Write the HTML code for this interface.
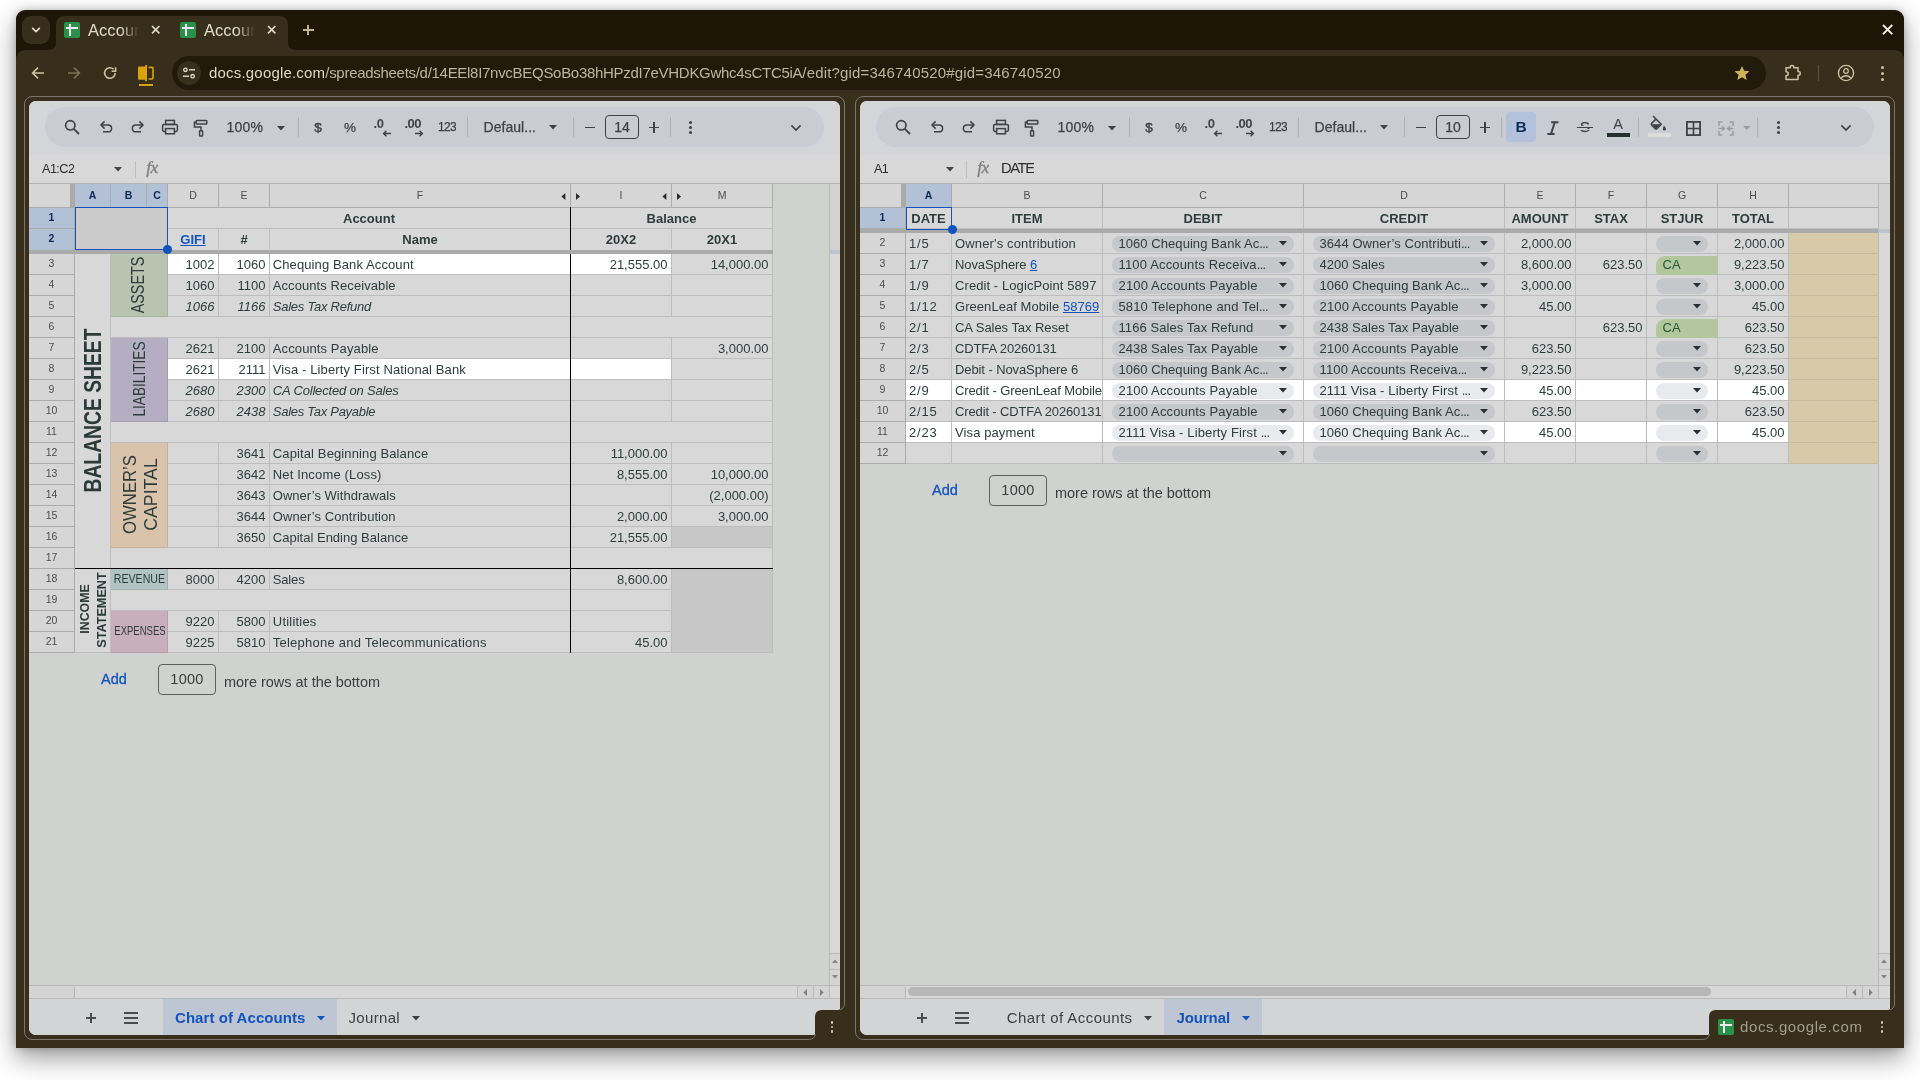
<!DOCTYPE html>
<html><head><meta charset="utf-8"><title>Sheets split view</title>
<style>
html,body{margin:0;padding:0;}
body{width:1920px;height:1080px;background:#fff;position:relative;overflow:hidden;font-family:"Liberation Sans",sans-serif;}
div{position:absolute;box-sizing:border-box;}
svg{position:absolute;overflow:visible;}
.t{white-space:nowrap;overflow:hidden;}
.v{white-space:nowrap;transform-origin:0 0;}
</style></head><body>
<div style="left:0;top:0;width:1920px;height:1080px;will-change:transform;">
<div style="left:16px;top:10px;width:1888px;height:1038px;background:#1e1607;border-radius:9px 9px 0 0;box-shadow:0 10px 26px rgba(0,0,0,.40),0 0 8px rgba(0,0,0,.22);"></div>
<div style="left:16px;top:50px;width:1888px;height:998px;background:#372f1b;border-radius:9px 9px 0 0;"></div>
<svg style="left:0;top:0" width="1920" height="100"><path d="M48 50 Q56 50 56 42 L56 25 Q56 16 65 16 L279 16 Q288 16 288 25 L288 42 Q288 50 296 50 Z" fill="#372f1b"/></svg>
<div style="left:22px;top:16px;width:28px;height:28px;background:#372f1b;border-radius:9px;"></div>
<svg style="left:30px;top:25px" width="12" height="10" viewBox="0 0 12 10"><path d="M2.2 2.8 L6 6.6 L9.8 2.8" fill="none" stroke="#e3ddcb" stroke-width="1.7"/></svg>
<div style="left:64px;top:22px;width:16px;height:16px;background:#2a9149;border-radius:2px;"></div>
<div style="left:69px;top:24px;width:2.4px;height:12px;background:#f1e6f1;"></div>
<div style="left:66px;top:27px;width:12px;height:2.2px;background:#f1e6f1;"></div>
<div style="left:180px;top:22px;width:16px;height:16px;background:#2a9149;border-radius:2px;"></div>
<div style="left:185px;top:24px;width:2.4px;height:12px;background:#f1e6f1;"></div>
<div style="left:182px;top:27px;width:12px;height:2.2px;background:#f1e6f1;"></div>
<div class="t" style="left:88px;top:18.7px;font-size:16.4px;line-height:22px;height:22px;color:#e3ddcb;letter-spacing:0.12px;width:52px;text-align:left;-webkit-mask-image:linear-gradient(90deg,#000 62%,transparent 98%);mask-image:linear-gradient(90deg,#000 62%,transparent 98%);">Account</div>
<div class="t" style="left:204px;top:18.7px;font-size:16.4px;line-height:22px;height:22px;color:#e3ddcb;letter-spacing:0.12px;width:52px;text-align:left;-webkit-mask-image:linear-gradient(90deg,#000 62%,transparent 98%);mask-image:linear-gradient(90deg,#000 62%,transparent 98%);">Account</div>
<svg style="left:151.3px;top:25.3px" width="9.4" height="9.4"><path d="M1 1 L8.4 8.4 M8.4 1 L1 8.4" stroke="#e3ddcb" stroke-width="1.6" fill="none"/></svg>
<svg style="left:267.3px;top:25.3px" width="9.4" height="9.4"><path d="M1 1 L8.4 8.4 M8.4 1 L1 8.4" stroke="#e3ddcb" stroke-width="1.6" fill="none"/></svg>
<div style="left:303px;top:29px;width:10.5px;height:2px;background:#bfb48f;"></div>
<div style="left:307.2px;top:24.8px;width:2px;height:10.5px;background:#bfb48f;"></div>
<svg style="left:1882.4px;top:24.4px" width="11.2" height="11.2"><path d="M1 1 L10.2 10.2 M10.2 1 L1 10.2" stroke="#f2efe6" stroke-width="1.9" fill="none"/></svg>
<svg style="left:31px;top:66px" width="14" height="14" viewBox="0 0 14 14"><path d="M13 7 H2.2 M7 1.6 L1.6 7 L7 12.4" fill="none" stroke="#cdc3a2" stroke-width="1.6"/></svg>
<svg style="left:67px;top:66px" width="14" height="14" viewBox="0 0 14 14"><path d="M1 7 H11.8 M7 1.6 L12.4 7 L7 12.4" fill="none" stroke="#7d735a" stroke-width="1.6"/></svg>
<svg style="left:102px;top:65px" width="16" height="16" viewBox="0 0 16 16"><path d="M13.2 8 A5.3 5.3 0 1 1 11.6 4.2" fill="none" stroke="#cdc3a2" stroke-width="1.6"/><path d="M13.6 2.2 V6.2 H9.6" fill="none" stroke="#cdc3a2" stroke-width="1.6"/></svg>
<svg style="left:137px;top:64px" width="18" height="24" viewBox="0 0 18 24"><path d="M2.2 2.6 H8.2 V1 H10 V17.2 H8.2 V15.8 H2.2 Q1 15.8 1 14.6 V3.8 Q1 2.6 2.2 2.6 Z" fill="#d9a30c"/><path d="M11.6 3.4 H14.8 Q16 3.4 16 4.6 V13.8 Q16 15 14.8 15 H11.6" fill="none" stroke="#d9a30c" stroke-width="1.6"/><rect x="2" y="20" width="14" height="2" fill="#d9a30c"/></svg>
<div style="left:172px;top:56px;width:1594px;height:34px;background:#221a0a;border-radius:17px;"></div>
<div style="left:177px;top:61px;width:24px;height:24px;background:#372f1b;border-radius:12px;"></div>
<svg style="left:181px;top:65px" width="16" height="16" viewBox="0 0 16 16"><circle cx="4.4" cy="4.8" r="1.7" fill="none" stroke="#e3ddcb" stroke-width="1.3"/><path d="M8 4.8 H14" stroke="#e3ddcb" stroke-width="1.4"/><circle cx="11.6" cy="11.2" r="1.7" fill="none" stroke="#e3ddcb" stroke-width="1.3"/><path d="M2 11.2 H8" stroke="#e3ddcb" stroke-width="1.4"/></svg>
<div class="t" style="left:209px;top:62px;font-size:15px;line-height:22px;height:22px;color:#bcb5a1;"><span style="color:#dfd9c6;letter-spacing:0.192px">docs.google.com</span><span style="letter-spacing:-0.29px">/spreadsheets/d/14EEl8I7nvcBEQSoBo38hHPzdI7eVHDKGwhc4sCTC5iA</span><span style="letter-spacing:0.176px">/edit?gid=346740520#gid=346740520</span></div>
<svg style="left:1733px;top:64px" width="18" height="18" viewBox="0 0 24 24"><path d="M12 2.5 L14.9 9 L22 9.7 L16.6 14.4 L18.2 21.4 L12 17.7 L5.8 21.4 L7.4 14.4 L2 9.7 L9.1 9 Z" fill="#cdb45a"/></svg>
<svg style="left:1783px;top:63px" width="19" height="19" viewBox="0 0 19 19"><path d="M3 4.8 H7.2 Q7 2.4 9 2.4 Q11 2.4 10.8 4.8 H15 V8.6 Q17.2 8.4 17.2 10.4 Q17.2 12.4 15 12.2 V16.6 H3 V12.8 Q5.2 12.8 5.2 10.8 Q5.2 8.8 3 8.8 Z" fill="none" stroke="#cdc3a2" stroke-width="1.5" stroke-linejoin="round"/></svg>
<div style="left:1818px;top:65px;width:1.2px;height:16px;background:#5a5038;"></div>
<svg style="left:1837px;top:64px" width="18" height="18" viewBox="0 0 18 18"><circle cx="9" cy="9" r="7.6" fill="none" stroke="#cdc3a2" stroke-width="1.4"/><circle cx="9" cy="7" r="2.3" fill="none" stroke="#cdc3a2" stroke-width="1.3"/><path d="M4 14 Q9 9.6 14 14" fill="none" stroke="#cdc3a2" stroke-width="1.3"/></svg>
<div style="left:1880.5px;top:66.1px;width:3px;height:3px;background:#cdc3a2;border-radius:2px;"></div>
<div style="left:1880.5px;top:72.1px;width:3px;height:3px;background:#cdc3a2;border-radius:2px;"></div>
<div style="left:1880.5px;top:78.1px;width:3px;height:3px;background:#cdc3a2;border-radius:2px;"></div>
<div style="left:24px;top:96px;width:821px;height:944px;border:1px solid #7c766a;border-radius:8px;"></div>
<div style="left:855px;top:96px;width:1040px;height:944px;border:1px solid #7c766a;border-radius:8px;"></div>
<div style="left:29px;top:101px;width:811px;height:934px;background:#d0d2cf;border-radius:7px;overflow:hidden;">
<div style="left:0px;top:-1px;width:811px;height:55px;background:#d4d5d8;"></div>
<div style="left:16px;top:6px;width:779px;height:40px;background:#c9cdd3;border-radius:20px;"></div>
<svg style="left:34px;top:17px" width="18" height="18"><circle cx="7.3" cy="7.3" r="4.7" fill="none" stroke="#3f4245" stroke-width="1.7"/><path d="M10.8 10.8 L16 16" stroke="#3f4245" stroke-width="1.9"/></svg>
<svg style="left:70px;top:18px" width="15" height="16"><path d="M2.2 6 H9 Q12.6 6 12.6 9.4 Q12.6 12.8 9 12.8 H4" fill="none" stroke="#3f4245" stroke-width="1.5"/><path d="M5.6 2.4 L2 6 L5.6 9.6" fill="none" stroke="#3f4245" stroke-width="1.5"/></svg>
<svg style="left:101px;top:18px" width="15" height="16"><path d="M12.8 6 H6 Q2.4 6 2.4 9.4 Q2.4 12.8 6 12.8 H11" fill="none" stroke="#3f4245" stroke-width="1.5"/><path d="M9.4 2.4 L13 6 L9.4 9.6" fill="none" stroke="#3f4245" stroke-width="1.5"/></svg>
<svg style="left:132px;top:18px" width="18" height="17"><rect x="4.6" y="1.4" width="8.8" height="4" fill="none" stroke="#3f4245" stroke-width="1.5"/><rect x="1.6" y="5.4" width="14.8" height="7" rx="1.4" fill="none" stroke="#3f4245" stroke-width="1.5"/><rect x="4.6" y="9.6" width="8.8" height="5.2" fill="#c9cdd3" stroke="#3f4245" stroke-width="1.5"/></svg>
<svg style="left:164px;top:18px" width="16" height="19"><rect x="3.2" y="1.4" width="10.6" height="3.6" rx="0.8" fill="none" stroke="#3f4245" stroke-width="1.5"/><path d="M3.2 3.2 H1.4 V8 H8 V11.6" fill="none" stroke="#3f4245" stroke-width="1.5"/><rect x="6.6" y="11.8" width="3" height="5.2" rx="0.6" fill="none" stroke="#3f4245" stroke-width="1.4"/></svg>
<div class="t" style="left:197.5px;top:17px;font-size:14px;line-height:19px;height:19px;color:#3f4245;letter-spacing:0.176px;-webkit-text-stroke:0.25px #3f4245;">100%</div>
<svg style="left:247.5px;top:24.95px" width="8" height="4.5"><path d="M0 0 H8 L4.0 4.5 Z" fill="#3f4245"/></svg>
<div style="left:269px;top:16px;width:1px;height:20px;background:#b0b3b7;"></div>
<div class="t" style="left:282px;top:17px;font-size:13.5px;line-height:19px;height:19px;color:#3f4245;width:14px;text-align:center;-webkit-text-stroke:0.45px #3f4245;">$</div>
<div class="t" style="left:313px;top:17px;font-size:13.5px;line-height:19px;height:19px;color:#3f4245;width:16px;text-align:center;-webkit-text-stroke:0.25px #3f4245;">%</div>
<div class="t" style="left:344.5px;top:13.5px;font-size:13px;line-height:18px;height:18px;color:#3f4245;font-weight:700;letter-spacing:-0.3px;">.0</div>
<svg style="left:353px;top:29px" width="10" height="7"><path d="M9 3.5 H2 M4.4 0.8 L1.6 3.5 L4.4 6.2" fill="none" stroke="#3f4245" stroke-width="1.4"/></svg>
<div class="t" style="left:375.5px;top:13.5px;font-size:13px;line-height:18px;height:18px;color:#3f4245;font-weight:700;letter-spacing:-0.5px;">.00</div>
<svg style="left:384.5px;top:29px" width="10" height="7"><path d="M1 3.5 H8 M5.6 0.8 L8.4 3.5 L5.6 6.2" fill="none" stroke="#3f4245" stroke-width="1.4"/></svg>
<div class="t" style="left:409px;top:18px;font-size:12px;line-height:17px;height:17px;color:#3f4245;letter-spacing:-0.672px;-webkit-text-stroke:0.25px #3f4245;">123</div>
<div style="left:438px;top:16px;width:1px;height:20px;background:#b0b3b7;"></div>
<div class="t" style="left:454.5px;top:16.5px;font-size:14px;line-height:19px;height:19px;color:#3f4245;letter-spacing:0.042px;-webkit-text-stroke:0.25px #3f4245;">Defaul...</div>
<svg style="left:520.0px;top:24.35px" width="8" height="4.5"><path d="M0 0 H8 L4.0 4.5 Z" fill="#3f4245"/></svg>
<div style="left:544px;top:16px;width:1px;height:20px;background:#b0b3b7;"></div>
<div style="left:556px;top:25.6px;width:10px;height:1.8px;background:#3f4245;"></div>
<div style="left:576px;top:14px;width:34px;height:24px;border:1px solid #3f4245;border-radius:4px;"></div>
<div class="t" style="left:576px;top:17px;font-size:14px;line-height:19px;height:19px;color:#3f4245;width:34px;text-align:center;-webkit-text-stroke:0.25px #3f4245;">14</div>
<div style="left:619.8px;top:25.6px;width:10.6px;height:1.8px;background:#3f4245;"></div>
<div style="left:624.2px;top:21.2px;width:1.8px;height:10.6px;background:#3f4245;"></div>
<div style="left:641px;top:16px;width:1px;height:20px;background:#b0b3b7;"></div>
<div style="left:660.3px;top:20.1px;width:3.0px;height:3.0px;background:#3f4245;border-radius:1.5px;"></div>
<div style="left:660.3px;top:25.1px;width:3.0px;height:3.0px;background:#3f4245;border-radius:1.5px;"></div>
<div style="left:660.3px;top:30.1px;width:3.0px;height:3.0px;background:#3f4245;border-radius:1.5px;"></div>
<svg style="left:761px;top:23px" width="12" height="8"><path d="M1.4 1.4 L6 6 L10.6 1.4" fill="none" stroke="#3f4245" stroke-width="1.6"/></svg>
<div style="left:0px;top:54px;width:811px;height:29px;background:#d8d8d8;border-bottom:1px solid #b4b4b4;"></div>
<div class="t" style="left:13px;top:58.6px;font-size:12.6px;line-height:18px;height:18px;color:#2a2c2e;letter-spacing:-0.52px;">A1:C2</div>
<svg style="left:85.0px;top:65.75px" width="8" height="4.5"><path d="M0 0 H8 L4.0 4.5 Z" fill="#444"/></svg>
<div style="left:106px;top:60px;width:1px;height:17px;background:#bdbdbd;"></div>
<div class="t" style="left:117.2px;top:55.3px;font-size:17.5px;line-height:22px;height:22px;color:#808080;font-style:italic;font-family:'Liberation Serif',serif;letter-spacing:-0.6px;-webkit-text-stroke:0.35px #808080;">fx</div>
<div style="left:0px;top:83px;width:744px;height:469px;background:#d8d8d8;"></div>
<div style="left:0px;top:83px;width:744px;height:24px;background:#d6d6d6;"></div>
<div style="left:0px;top:83px;width:46px;height:469px;background:#d6d6d6;"></div>
<div style="left:46px;top:83px;width:93px;height:23px;background:#b3c1d7;"></div>
<div style="left:0px;top:107px;width:45px;height:42px;background:#b3c1d7;"></div>
<div style="left:139px;top:153px;width:503px;height:20px;background:#fff;"></div>
<div style="left:139px;top:258px;width:503px;height:20px;background:#fff;"></div>
<div style="left:643px;top:426px;width:100px;height:20px;background:#c7c7c7;"></div>
<div style="left:643px;top:468px;width:100px;height:83px;background:#c7c7c7;"></div>
<div style="left:46px;top:107px;width:92px;height:41px;background:#cbcbcb;"></div>
<div style="left:0px;top:106px;width:744px;height:1px;background:#ababab;"></div>
<div style="left:41px;top:83px;width:1px;height:23px;background:#ababab;"></div>
<div style="left:81px;top:83px;width:1px;height:23px;background:#ababab;"></div>
<div style="left:117px;top:83px;width:1px;height:23px;background:#ababab;"></div>
<div style="left:138px;top:83px;width:1px;height:23px;background:#ababab;"></div>
<div style="left:189px;top:83px;width:1px;height:23px;background:#ababab;"></div>
<div style="left:240px;top:83px;width:1px;height:23px;background:#ababab;"></div>
<div style="left:541px;top:83px;width:1px;height:23px;background:#ababab;"></div>
<div style="left:642px;top:83px;width:1px;height:23px;background:#ababab;"></div>
<div style="left:743px;top:83px;width:1px;height:23px;background:#ababab;"></div>
<div style="left:0px;top:127px;width:46px;height:1px;background:#ababab;"></div>
<div style="left:0px;top:173px;width:46px;height:1px;background:#ababab;"></div>
<div style="left:0px;top:194px;width:46px;height:1px;background:#ababab;"></div>
<div style="left:0px;top:215px;width:46px;height:1px;background:#ababab;"></div>
<div style="left:0px;top:236px;width:46px;height:1px;background:#ababab;"></div>
<div style="left:0px;top:257px;width:46px;height:1px;background:#ababab;"></div>
<div style="left:0px;top:278px;width:46px;height:1px;background:#ababab;"></div>
<div style="left:0px;top:299px;width:46px;height:1px;background:#ababab;"></div>
<div style="left:0px;top:320px;width:46px;height:1px;background:#ababab;"></div>
<div style="left:0px;top:341px;width:46px;height:1px;background:#ababab;"></div>
<div style="left:0px;top:362px;width:46px;height:1px;background:#ababab;"></div>
<div style="left:0px;top:383px;width:46px;height:1px;background:#ababab;"></div>
<div style="left:0px;top:404px;width:46px;height:1px;background:#ababab;"></div>
<div style="left:0px;top:425px;width:46px;height:1px;background:#ababab;"></div>
<div style="left:0px;top:446px;width:46px;height:1px;background:#ababab;"></div>
<div style="left:0px;top:467px;width:46px;height:1px;background:#ababab;"></div>
<div style="left:0px;top:488px;width:46px;height:1px;background:#ababab;"></div>
<div style="left:0px;top:509px;width:46px;height:1px;background:#ababab;"></div>
<div style="left:0px;top:530px;width:46px;height:1px;background:#ababab;"></div>
<div style="left:0px;top:551px;width:46px;height:1px;background:#ababab;"></div>
<div style="left:45px;top:107px;width:1px;height:445px;background:#ababab;"></div>
<div style="left:139px;top:127px;width:605px;height:1px;background:#bdbdbd;"></div>
<div style="left:139px;top:173px;width:503px;height:1px;background:#bdbdbd;"></div>
<div style="left:642px;top:173px;width:102px;height:1px;background:#bdbdbd;"></div>
<div style="left:139px;top:194px;width:503px;height:1px;background:#bdbdbd;"></div>
<div style="left:642px;top:194px;width:102px;height:1px;background:#bdbdbd;"></div>
<div style="left:82px;top:215px;width:57px;height:1px;background:#bdbdbd;"></div>
<div style="left:139px;top:215px;width:503px;height:1px;background:#bdbdbd;"></div>
<div style="left:642px;top:215px;width:102px;height:1px;background:#bdbdbd;"></div>
<div style="left:82px;top:236px;width:57px;height:1px;background:#bdbdbd;"></div>
<div style="left:139px;top:236px;width:503px;height:1px;background:#bdbdbd;"></div>
<div style="left:642px;top:236px;width:102px;height:1px;background:#bdbdbd;"></div>
<div style="left:139px;top:257px;width:503px;height:1px;background:#bdbdbd;"></div>
<div style="left:642px;top:257px;width:102px;height:1px;background:#bdbdbd;"></div>
<div style="left:139px;top:278px;width:503px;height:1px;background:#bdbdbd;"></div>
<div style="left:642px;top:278px;width:102px;height:1px;background:#bdbdbd;"></div>
<div style="left:139px;top:299px;width:503px;height:1px;background:#bdbdbd;"></div>
<div style="left:642px;top:299px;width:102px;height:1px;background:#bdbdbd;"></div>
<div style="left:82px;top:320px;width:57px;height:1px;background:#bdbdbd;"></div>
<div style="left:139px;top:320px;width:503px;height:1px;background:#bdbdbd;"></div>
<div style="left:642px;top:320px;width:102px;height:1px;background:#bdbdbd;"></div>
<div style="left:82px;top:341px;width:57px;height:1px;background:#bdbdbd;"></div>
<div style="left:139px;top:341px;width:503px;height:1px;background:#bdbdbd;"></div>
<div style="left:642px;top:341px;width:102px;height:1px;background:#bdbdbd;"></div>
<div style="left:139px;top:362px;width:503px;height:1px;background:#bdbdbd;"></div>
<div style="left:642px;top:362px;width:102px;height:1px;background:#bdbdbd;"></div>
<div style="left:139px;top:383px;width:503px;height:1px;background:#bdbdbd;"></div>
<div style="left:642px;top:383px;width:102px;height:1px;background:#bdbdbd;"></div>
<div style="left:139px;top:404px;width:503px;height:1px;background:#bdbdbd;"></div>
<div style="left:642px;top:404px;width:102px;height:1px;background:#bdbdbd;"></div>
<div style="left:139px;top:425px;width:503px;height:1px;background:#bdbdbd;"></div>
<div style="left:642px;top:425px;width:102px;height:1px;background:#bdbdbd;"></div>
<div style="left:82px;top:446px;width:57px;height:1px;background:#bdbdbd;"></div>
<div style="left:139px;top:446px;width:503px;height:1px;background:#bdbdbd;"></div>
<div style="left:642px;top:446px;width:102px;height:1px;background:#bdbdbd;"></div>
<div style="left:46px;top:467px;width:36px;height:1px;background:#bdbdbd;"></div>
<div style="left:82px;top:467px;width:57px;height:1px;background:#bdbdbd;"></div>
<div style="left:139px;top:467px;width:503px;height:1px;background:#bdbdbd;"></div>
<div style="left:642px;top:467px;width:102px;height:1px;background:#bdbdbd;"></div>
<div style="left:82px;top:488px;width:57px;height:1px;background:#bdbdbd;"></div>
<div style="left:139px;top:488px;width:503px;height:1px;background:#bdbdbd;"></div>
<div style="left:82px;top:509px;width:57px;height:1px;background:#bdbdbd;"></div>
<div style="left:139px;top:509px;width:503px;height:1px;background:#bdbdbd;"></div>
<div style="left:139px;top:530px;width:503px;height:1px;background:#bdbdbd;"></div>
<div style="left:46px;top:551px;width:36px;height:1px;background:#bdbdbd;"></div>
<div style="left:82px;top:551px;width:57px;height:1px;background:#bdbdbd;"></div>
<div style="left:139px;top:551px;width:503px;height:1px;background:#bdbdbd;"></div>
<div style="left:642px;top:551px;width:102px;height:1px;background:#bdbdbd;"></div>
<div style="left:46px;top:551px;width:698px;height:1px;background:#bdbdbd;"></div>
<div style="left:81px;top:153px;width:1px;height:399px;background:#bdbdbd;"></div>
<div style="left:138px;top:153px;width:1px;height:62px;background:#bdbdbd;"></div>
<div style="left:138px;top:237px;width:1px;height:83px;background:#bdbdbd;"></div>
<div style="left:138px;top:342px;width:1px;height:104px;background:#bdbdbd;"></div>
<div style="left:138px;top:468px;width:1px;height:20px;background:#bdbdbd;"></div>
<div style="left:138px;top:510px;width:1px;height:41px;background:#bdbdbd;"></div>
<div style="left:189px;top:128px;width:1px;height:20px;background:#bdbdbd;"></div>
<div style="left:240px;top:128px;width:1px;height:20px;background:#bdbdbd;"></div>
<div style="left:189px;top:153px;width:1px;height:62px;background:#bdbdbd;"></div>
<div style="left:240px;top:153px;width:1px;height:62px;background:#bdbdbd;"></div>
<div style="left:189px;top:237px;width:1px;height:83px;background:#bdbdbd;"></div>
<div style="left:240px;top:237px;width:1px;height:83px;background:#bdbdbd;"></div>
<div style="left:189px;top:342px;width:1px;height:104px;background:#bdbdbd;"></div>
<div style="left:240px;top:342px;width:1px;height:104px;background:#bdbdbd;"></div>
<div style="left:189px;top:468px;width:1px;height:20px;background:#bdbdbd;"></div>
<div style="left:240px;top:468px;width:1px;height:20px;background:#bdbdbd;"></div>
<div style="left:189px;top:510px;width:1px;height:41px;background:#bdbdbd;"></div>
<div style="left:240px;top:510px;width:1px;height:41px;background:#bdbdbd;"></div>
<div style="left:138px;top:128px;width:1px;height:20px;background:#bdbdbd;"></div>
<div style="left:642px;top:128px;width:1px;height:20px;background:#bdbdbd;"></div>
<div style="left:642px;top:153px;width:1px;height:62px;background:#bdbdbd;"></div>
<div style="left:642px;top:237px;width:1px;height:83px;background:#bdbdbd;"></div>
<div style="left:642px;top:342px;width:1px;height:104px;background:#bdbdbd;"></div>
<div style="left:642px;top:468px;width:1px;height:83px;background:#bdbdbd;"></div>
<div style="left:743px;top:107px;width:1px;height:445px;background:#bdbdbd;"></div>
<div style="left:82px;top:153px;width:57px;height:63px;background:#b8c4b0;box-shadow:inset -1px -1px 0 rgba(0,0,0,.09);"></div>
<div style="left:82px;top:237px;width:57px;height:84px;background:#b3aec2;box-shadow:inset -1px -1px 0 rgba(0,0,0,.09);"></div>
<div style="left:82px;top:342px;width:57px;height:105px;background:#d9c3ab;box-shadow:inset -1px -1px 0 rgba(0,0,0,.09);"></div>
<div style="left:82px;top:468px;width:57px;height:21px;background:#b1c3c2;box-shadow:inset -1px -1px 0 rgba(0,0,0,.09);"></div>
<div style="left:82px;top:510px;width:57px;height:42px;background:#c8afbb;box-shadow:inset -1px -1px 0 rgba(0,0,0,.09);"></div>
<div style="left:541px;top:106px;width:1.2px;height:446px;background:#000;"></div>
<div style="left:46px;top:466.8px;width:698px;height:1.2px;background:#000;"></div>
<div style="left:0px;top:149px;width:744px;height:4px;background:#aaaaaa;"></div>
<div style="left:41px;top:83px;width:5px;height:23px;background:#aaaaaa;"></div>
<div class="t" style="left:43.5px;top:85.1px;font-size:10.5px;line-height:18px;height:18px;color:#0d2a57;font-weight:700;width:40px;text-align:center;">A</div>
<div class="t" style="left:79.5px;top:85.1px;font-size:10.5px;line-height:18px;height:18px;color:#0d2a57;font-weight:700;width:40px;text-align:center;">B</div>
<div class="t" style="left:108px;top:85.1px;font-size:10.5px;line-height:18px;height:18px;color:#0d2a57;font-weight:700;width:40px;text-align:center;">C</div>
<div class="t" style="left:144px;top:85.1px;font-size:10.5px;line-height:18px;height:18px;color:#4a4d50;width:40px;text-align:center;">D</div>
<div class="t" style="left:195px;top:85.1px;font-size:10.5px;line-height:18px;height:18px;color:#4a4d50;width:40px;text-align:center;">E</div>
<div class="t" style="left:371px;top:85.1px;font-size:10.5px;line-height:18px;height:18px;color:#4a4d50;width:40px;text-align:center;">F</div>
<div class="t" style="left:572px;top:85.1px;font-size:10.5px;line-height:18px;height:18px;color:#4a4d50;width:40px;text-align:center;">I</div>
<div class="t" style="left:673px;top:85.1px;font-size:10.5px;line-height:18px;height:18px;color:#4a4d50;width:40px;text-align:center;">M</div>
<svg style="left:532.1px;top:91.8px" width="4.4" height="7"><path d="M4.4 0 L0.4 3.5 L4.4 7 Z" fill="#2d2d2d"/></svg>
<svg style="left:546.6px;top:91.8px" width="4.4" height="7"><path d="M0 0 L4 3.5 L0 7 Z" fill="#2d2d2d"/></svg>
<svg style="left:633.1px;top:91.8px" width="4.4" height="7"><path d="M4.4 0 L0.4 3.5 L4.4 7 Z" fill="#2d2d2d"/></svg>
<svg style="left:647.6px;top:91.8px" width="4.4" height="7"><path d="M0 0 L4 3.5 L0 7 Z" fill="#2d2d2d"/></svg>
<div class="t" style="left:0px;top:107.1px;font-size:10.5px;line-height:18px;height:18px;color:#0d2a57;font-weight:700;width:45px;text-align:center;">1</div>
<div class="t" style="left:0px;top:128.1px;font-size:10.5px;line-height:18px;height:18px;color:#0d2a57;font-weight:700;width:45px;text-align:center;">2</div>
<div class="t" style="left:0px;top:153.1px;font-size:10.5px;line-height:18px;height:18px;color:#4a4d50;width:45px;text-align:center;">3</div>
<div class="t" style="left:0px;top:174.1px;font-size:10.5px;line-height:18px;height:18px;color:#4a4d50;width:45px;text-align:center;">4</div>
<div class="t" style="left:0px;top:195.1px;font-size:10.5px;line-height:18px;height:18px;color:#4a4d50;width:45px;text-align:center;">5</div>
<div class="t" style="left:0px;top:216.1px;font-size:10.5px;line-height:18px;height:18px;color:#4a4d50;width:45px;text-align:center;">6</div>
<div class="t" style="left:0px;top:237.1px;font-size:10.5px;line-height:18px;height:18px;color:#4a4d50;width:45px;text-align:center;">7</div>
<div class="t" style="left:0px;top:258.1px;font-size:10.5px;line-height:18px;height:18px;color:#4a4d50;width:45px;text-align:center;">8</div>
<div class="t" style="left:0px;top:279.1px;font-size:10.5px;line-height:18px;height:18px;color:#4a4d50;width:45px;text-align:center;">9</div>
<div class="t" style="left:0px;top:300.1px;font-size:10.5px;line-height:18px;height:18px;color:#4a4d50;width:45px;text-align:center;">10</div>
<div class="t" style="left:0px;top:321.1px;font-size:10.5px;line-height:18px;height:18px;color:#4a4d50;width:45px;text-align:center;">11</div>
<div class="t" style="left:0px;top:342.1px;font-size:10.5px;line-height:18px;height:18px;color:#4a4d50;width:45px;text-align:center;">12</div>
<div class="t" style="left:0px;top:363.1px;font-size:10.5px;line-height:18px;height:18px;color:#4a4d50;width:45px;text-align:center;">13</div>
<div class="t" style="left:0px;top:384.1px;font-size:10.5px;line-height:18px;height:18px;color:#4a4d50;width:45px;text-align:center;">14</div>
<div class="t" style="left:0px;top:405.1px;font-size:10.5px;line-height:18px;height:18px;color:#4a4d50;width:45px;text-align:center;">15</div>
<div class="t" style="left:0px;top:426.1px;font-size:10.5px;line-height:18px;height:18px;color:#4a4d50;width:45px;text-align:center;">16</div>
<div class="t" style="left:0px;top:447.1px;font-size:10.5px;line-height:18px;height:18px;color:#4a4d50;width:45px;text-align:center;">17</div>
<div class="t" style="left:0px;top:468.1px;font-size:10.5px;line-height:18px;height:18px;color:#4a4d50;width:45px;text-align:center;">18</div>
<div class="t" style="left:0px;top:489.1px;font-size:10.5px;line-height:18px;height:18px;color:#4a4d50;width:45px;text-align:center;">19</div>
<div class="t" style="left:0px;top:510.1px;font-size:10.5px;line-height:18px;height:18px;color:#4a4d50;width:45px;text-align:center;">20</div>
<div class="t" style="left:0px;top:531.1px;font-size:10.5px;line-height:18px;height:18px;color:#4a4d50;width:45px;text-align:center;">21</div>
<div class="t" style="left:143px;top:107px;font-size:13px;line-height:21px;height:21px;color:#2e3d3b;font-weight:700;width:394px;text-align:center;">Account</div>
<div class="t" style="left:546px;top:107px;font-size:13px;line-height:21px;height:21px;color:#2e3d3b;font-weight:700;width:193px;text-align:center;">Balance</div>
<div class="t" style="left:143px;top:128px;font-size:13px;line-height:21px;height:21px;color:#1253bd;font-weight:700;width:42px;text-align:center;text-decoration:underline;">GIFI</div>
<div class="t" style="left:194px;top:128px;font-size:13px;line-height:21px;height:21px;color:#2e3d3b;font-weight:700;width:42px;text-align:center;">#</div>
<div class="t" style="left:245px;top:128px;font-size:13px;line-height:21px;height:21px;color:#2e3d3b;font-weight:700;width:292px;text-align:center;">Name</div>
<div class="t" style="left:546px;top:128px;font-size:13px;line-height:21px;height:21px;color:#2e3d3b;font-weight:700;width:92px;text-align:center;">20X2</div>
<div class="t" style="left:647px;top:128px;font-size:13px;line-height:21px;height:21px;color:#2e3d3b;font-weight:700;width:92px;text-align:center;">20X1</div>
<div class="t" style="left:142.5px;top:153px;font-size:13px;line-height:21px;height:21px;color:#2e3d3b;width:43.0px;text-align:right;">1002</div>
<div class="t" style="left:193.5px;top:153px;font-size:13px;line-height:21px;height:21px;color:#2e3d3b;width:43.0px;text-align:right;">1060</div>
<div class="t" style="left:243.8px;top:153px;font-size:13px;line-height:21px;height:21px;color:#2e3d3b;letter-spacing:0.104px;width:294.4px;text-align:left;">Chequing Bank Account</div>
<div class="t" style="left:545.5px;top:153px;font-size:13px;line-height:21px;height:21px;color:#2e3d3b;width:93.0px;text-align:right;">21,555.00</div>
<div class="t" style="left:646.5px;top:153px;font-size:13px;line-height:21px;height:21px;color:#2e3d3b;width:93.0px;text-align:right;">14,000.00</div>
<div class="t" style="left:142.5px;top:174px;font-size:13px;line-height:21px;height:21px;color:#2e3d3b;width:43.0px;text-align:right;">1060</div>
<div class="t" style="left:193.5px;top:174px;font-size:13px;line-height:21px;height:21px;color:#2e3d3b;width:43.0px;text-align:right;">1100</div>
<div class="t" style="left:243.8px;top:174px;font-size:13px;line-height:21px;height:21px;color:#2e3d3b;letter-spacing:0.077px;width:294.4px;text-align:left;">Accounts Receivable</div>
<div class="t" style="left:142.5px;top:195px;font-size:13px;line-height:21px;height:21px;color:#2e3d3b;font-style:italic;width:43.0px;text-align:right;">1066</div>
<div class="t" style="left:193.5px;top:195px;font-size:13px;line-height:21px;height:21px;color:#2e3d3b;font-style:italic;width:43.0px;text-align:right;">1166</div>
<div class="t" style="left:243.8px;top:195px;font-size:13px;line-height:21px;height:21px;color:#2e3d3b;letter-spacing:-0.242px;font-style:italic;width:294.4px;text-align:left;">Sales Tax Refund</div>
<div class="t" style="left:142.5px;top:237px;font-size:13px;line-height:21px;height:21px;color:#2e3d3b;width:43.0px;text-align:right;">2621</div>
<div class="t" style="left:193.5px;top:237px;font-size:13px;line-height:21px;height:21px;color:#2e3d3b;width:43.0px;text-align:right;">2100</div>
<div class="t" style="left:243.8px;top:237px;font-size:13px;line-height:21px;height:21px;color:#2e3d3b;letter-spacing:0.107px;width:294.4px;text-align:left;">Accounts Payable</div>
<div class="t" style="left:646.5px;top:237px;font-size:13px;line-height:21px;height:21px;color:#2e3d3b;width:93.0px;text-align:right;">3,000.00</div>
<div class="t" style="left:142.5px;top:258px;font-size:13px;line-height:21px;height:21px;color:#2e3d3b;width:43.0px;text-align:right;">2621</div>
<div class="t" style="left:193.5px;top:258px;font-size:13px;line-height:21px;height:21px;color:#2e3d3b;width:43.0px;text-align:right;">2111</div>
<div class="t" style="left:243.8px;top:258px;font-size:13px;line-height:21px;height:21px;color:#2e3d3b;letter-spacing:0.12px;width:294.4px;text-align:left;">Visa - Liberty First National Bank</div>
<div class="t" style="left:142.5px;top:279px;font-size:13px;line-height:21px;height:21px;color:#2e3d3b;font-style:italic;width:43.0px;text-align:right;">2680</div>
<div class="t" style="left:193.5px;top:279px;font-size:13px;line-height:21px;height:21px;color:#2e3d3b;font-style:italic;width:43.0px;text-align:right;">2300</div>
<div class="t" style="left:243.8px;top:279px;font-size:13px;line-height:21px;height:21px;color:#2e3d3b;letter-spacing:-0.182px;font-style:italic;width:294.4px;text-align:left;">CA Collected on Sales</div>
<div class="t" style="left:142.5px;top:300px;font-size:13px;line-height:21px;height:21px;color:#2e3d3b;font-style:italic;width:43.0px;text-align:right;">2680</div>
<div class="t" style="left:193.5px;top:300px;font-size:13px;line-height:21px;height:21px;color:#2e3d3b;font-style:italic;width:43.0px;text-align:right;">2438</div>
<div class="t" style="left:243.8px;top:300px;font-size:13px;line-height:21px;height:21px;color:#2e3d3b;letter-spacing:-0.278px;font-style:italic;width:294.4px;text-align:left;">Sales Tax Payable</div>
<div class="t" style="left:193.5px;top:342px;font-size:13px;line-height:21px;height:21px;color:#2e3d3b;width:43.0px;text-align:right;">3641</div>
<div class="t" style="left:243.8px;top:342px;font-size:13px;line-height:21px;height:21px;color:#2e3d3b;letter-spacing:0.12px;width:294.4px;text-align:left;">Capital Beginning Balance</div>
<div class="t" style="left:545.5px;top:342px;font-size:13px;line-height:21px;height:21px;color:#2e3d3b;width:93.0px;text-align:right;">11,000.00</div>
<div class="t" style="left:193.5px;top:363px;font-size:13px;line-height:21px;height:21px;color:#2e3d3b;width:43.0px;text-align:right;">3642</div>
<div class="t" style="left:243.8px;top:363px;font-size:13px;line-height:21px;height:21px;color:#2e3d3b;letter-spacing:0.149px;width:294.4px;text-align:left;">Net Income (Loss)</div>
<div class="t" style="left:545.5px;top:363px;font-size:13px;line-height:21px;height:21px;color:#2e3d3b;width:93.0px;text-align:right;">8,555.00</div>
<div class="t" style="left:646.5px;top:363px;font-size:13px;line-height:21px;height:21px;color:#2e3d3b;width:93.0px;text-align:right;">10,000.00</div>
<div class="t" style="left:193.5px;top:384px;font-size:13px;line-height:21px;height:21px;color:#2e3d3b;width:43.0px;text-align:right;">3643</div>
<div class="t" style="left:243.8px;top:384px;font-size:13px;line-height:21px;height:21px;color:#2e3d3b;letter-spacing:0.028px;width:294.4px;text-align:left;">Owner’s Withdrawals</div>
<div class="t" style="left:646.5px;top:384px;font-size:13px;line-height:21px;height:21px;color:#2e3d3b;width:93.0px;text-align:right;">(2,000.00)</div>
<div class="t" style="left:193.5px;top:405px;font-size:13px;line-height:21px;height:21px;color:#2e3d3b;width:43.0px;text-align:right;">3644</div>
<div class="t" style="left:243.8px;top:405px;font-size:13px;line-height:21px;height:21px;color:#2e3d3b;letter-spacing:0.061px;width:294.4px;text-align:left;">Owner’s Contribution</div>
<div class="t" style="left:545.5px;top:405px;font-size:13px;line-height:21px;height:21px;color:#2e3d3b;width:93.0px;text-align:right;">2,000.00</div>
<div class="t" style="left:646.5px;top:405px;font-size:13px;line-height:21px;height:21px;color:#2e3d3b;width:93.0px;text-align:right;">3,000.00</div>
<div class="t" style="left:193.5px;top:426px;font-size:13px;line-height:21px;height:21px;color:#2e3d3b;width:43.0px;text-align:right;">3650</div>
<div class="t" style="left:243.8px;top:426px;font-size:13px;line-height:21px;height:21px;color:#2e3d3b;letter-spacing:0.009px;width:294.4px;text-align:left;">Capital Ending Balance</div>
<div class="t" style="left:545.5px;top:426px;font-size:13px;line-height:21px;height:21px;color:#2e3d3b;width:93.0px;text-align:right;">21,555.00</div>
<div class="t" style="left:142.5px;top:468px;font-size:13px;line-height:21px;height:21px;color:#2e3d3b;width:43.0px;text-align:right;">8000</div>
<div class="t" style="left:193.5px;top:468px;font-size:13px;line-height:21px;height:21px;color:#2e3d3b;width:43.0px;text-align:right;">4200</div>
<div class="t" style="left:243.8px;top:468px;font-size:13px;line-height:21px;height:21px;color:#2e3d3b;letter-spacing:-0.166px;width:294.4px;text-align:left;">Sales</div>
<div class="t" style="left:545.5px;top:468px;font-size:13px;line-height:21px;height:21px;color:#2e3d3b;width:93.0px;text-align:right;">8,600.00</div>
<div class="t" style="left:142.5px;top:510px;font-size:13px;line-height:21px;height:21px;color:#2e3d3b;width:43.0px;text-align:right;">9220</div>
<div class="t" style="left:193.5px;top:510px;font-size:13px;line-height:21px;height:21px;color:#2e3d3b;width:43.0px;text-align:right;">5800</div>
<div class="t" style="left:243.8px;top:510px;font-size:13px;line-height:21px;height:21px;color:#2e3d3b;letter-spacing:0.205px;width:294.4px;text-align:left;">Utilities</div>
<div class="t" style="left:142.5px;top:531px;font-size:13px;line-height:21px;height:21px;color:#2e3d3b;width:43.0px;text-align:right;">9225</div>
<div class="t" style="left:193.5px;top:531px;font-size:13px;line-height:21px;height:21px;color:#2e3d3b;width:43.0px;text-align:right;">5810</div>
<div class="t" style="left:243.8px;top:531px;font-size:13px;line-height:21px;height:21px;color:#2e3d3b;letter-spacing:0.233px;width:294.4px;text-align:left;">Telephone and Telecommunications</div>
<div class="t" style="left:545.5px;top:531px;font-size:13px;line-height:21px;height:21px;color:#2e3d3b;width:93.0px;text-align:right;">45.00</div>
<div class="v" style="left:-40.53px;top:294.0px;width:209.25px;height:31px;line-height:31px;font-size:24.5px;color:#2b3937;font-weight:700;transform-origin:50% 50%;transform:rotate(-90deg) scaleX(0.7875);text-align:center;">BALANCE SHEET</div>
<div class="v" style="left:74.08px;top:172.5px;width:70.05px;height:22px;line-height:22px;font-size:17.5px;color:#2e3d3b;transform-origin:50% 50%;transform:rotate(-90deg) scaleX(0.8183);text-align:center;">ASSETS</div>
<div class="v" style="left:64.86px;top:267.8px;width:90.08px;height:20px;line-height:20px;font-size:16.2px;color:#2e3d3b;transform-origin:50% 50%;transform:rotate(-90deg) scaleX(0.8420);text-align:center;">LIABILITIES</div>
<div class="v" style="left:56.01px;top:382.0px;width:88.38px;height:23px;line-height:23px;font-size:18.5px;color:#2e3d3b;transform-origin:50% 50%;transform:rotate(-90deg) scaleX(0.9041);text-align:center;">OWNER’S</div>
<div class="v" style="left:83.33px;top:382.0px;width:76.73px;height:23px;line-height:23px;font-size:18.5px;color:#2e3d3b;transform-origin:50% 50%;transform:rotate(-90deg) scaleX(0.9573);text-align:center;">CAPITAL</div>
<div class="v" style="left:30.21px;top:500.3px;width:51.38px;height:16px;line-height:16px;font-size:12.6px;color:#2b3937;font-weight:700;transform-origin:50% 50%;transform:rotate(-90deg) scaleX(0.9826);text-align:center;">INCOME</div>
<div class="v" style="left:35.06px;top:501.2px;width:76.08px;height:16px;line-height:16px;font-size:12.6px;color:#2b3937;font-weight:700;transform-origin:50% 50%;transform:rotate(-90deg) scaleX(1.0056);text-align:center;">STATEMENT</div>
<div class="v" style="left:79.09px;top:469.6px;width:62.83px;height:16px;line-height:16px;font-size:12.8px;color:#2e3d3b;transform-origin:50% 50%;transform:scaleX(0.8281);text-align:center;">REVENUE</div>
<div class="v" style="left:75.52px;top:522.1px;width:69.95px;height:16px;line-height:16px;font-size:12.8px;color:#2e3d3b;transform-origin:50% 50%;transform:scaleX(0.7425);text-align:center;">EXPENSES</div>
<div style="left:46px;top:106px;width:93px;height:43px;border:1.75px solid #1253bd;"></div>
<div style="left:134.2px;top:144px;width:9px;height:9px;background:#1253bd;border-radius:5px;"></div>
<div class="t" style="left:72px;top:567.5px;font-size:14.5px;line-height:20px;height:20px;color:#1253bd;letter-spacing:0.068px;-webkit-text-stroke:0.3px #1253bd;">Add</div>
<div style="left:129px;top:563px;width:58px;height:31px;border:1px solid #5d5f61;border-radius:4px;"></div>
<div class="t" style="left:129px;top:567.5px;font-size:14.5px;line-height:20px;height:20px;color:#3a3d3f;letter-spacing:0.3px;width:58px;text-align:center;">1000</div>
<div class="t" style="left:195px;top:570.5px;font-size:14.5px;line-height:20px;height:20px;color:#3a3d3f;letter-spacing:-0.015px;">more rows at the bottom</div>
<div style="left:0px;top:884px;width:811px;height:13px;background:#d8d8d8;border-top:1px solid #b9b9b9;"></div>
<div style="left:0px;top:897px;width:811px;height:37px;background:#d3d4d6;border-top:1px solid #b9b9b9;"></div>
<div style="left:57px;top:916px;width:10px;height:2px;background:#4a4d50;"></div>
<div style="left:61px;top:912px;width:2px;height:10px;background:#4a4d50;"></div>
<div style="left:94.5px;top:911.4px;width:14px;height:2px;background:#4a4d50;"></div>
<div style="left:94.5px;top:916px;width:14px;height:2px;background:#4a4d50;"></div>
<div style="left:94.5px;top:920.6px;width:14px;height:2px;background:#4a4d50;"></div>
<div style="left:134px;top:898px;width:174px;height:36px;background:#bfc6d3;"></div>
<div class="t" style="left:146px;top:907px;font-size:15px;line-height:20px;height:20px;color:#1253bd;font-weight:700;letter-spacing:0.057px;">Chart of Accounts</div>
<svg style="left:287.5px;top:915.15px" width="8" height="4.5"><path d="M0 0 H8 L4.0 4.5 Z" fill="#1253bd"/></svg>
<div class="t" style="left:319.5px;top:907px;font-size:15px;line-height:20px;height:20px;color:#3c3f42;letter-spacing:0.328px;">Journal</div>
<svg style="left:382.5px;top:915.15px" width="8" height="4.5"><path d="M0 0 H8 L4.0 4.5 Z" fill="#3c3f42"/></svg>
<div style="left:800px;top:83px;width:11px;height:801px;background:#d8d8d8;border-left:1px solid #b9b9b9;"></div>
<div style="left:800px;top:852px;width:11px;height:17px;background:#d4d4d4;border-left:1px solid #b9b9b9;border-top:1px solid #b9b9b9;"></div>
<div style="left:800px;top:868px;width:11px;height:17px;background:#d4d4d4;border-left:1px solid #b9b9b9;border-top:1px solid #b9b9b9;"></div>
<svg style="left:803.4px;top:857.5px" width="6" height="4"><path d="M0 4 L3 0.4 L6 4 Z" fill="#858585"/></svg>
<svg style="left:803.4px;top:874.3px" width="6" height="4"><path d="M0 0 L3 3.6 L6 0 Z" fill="#858585"/></svg>
<div style="left:800px;top:884px;width:11px;height:13px;background:#d8d8d8;border-left:1px solid #b9b9b9;border-top:1px solid #b9b9b9;"></div>
<div style="left:801px;top:83px;width:10px;height:66px;background:#d3d3d3;"></div>
<div style="left:801px;top:149px;width:10px;height:4px;background:#bcc3ce;"></div>
<div style="left:768px;top:885px;width:16px;height:12px;background:#d4d4d4;border-left:1px solid #b9b9b9;"></div>
<div style="left:784px;top:885px;width:16px;height:12px;background:#d4d4d4;border-left:1px solid #b9b9b9;"></div>
<svg style="left:774px;top:887.5px" width="4" height="7"><path d="M4 0 L0.4 3.5 L4 7 Z" fill="#7d7d7d"/></svg>
<svg style="left:790.5px;top:887.5px" width="4" height="7"><path d="M0 0 L3.6 3.5 L0 7 Z" fill="#7d7d7d"/></svg>
<div style="left:45px;top:886px;width:1px;height:11px;background:#b5b5b5;"></div>
<div style="left:0px;top:885px;width:45px;height:12px;background:#d3d3d3;"></div>
</div>
<div style="left:860px;top:101px;width:1030px;height:934px;background:#d0d2cf;border-radius:7px;overflow:hidden;">
<div style="left:0px;top:-1px;width:1030px;height:55px;background:#d4d5d8;"></div>
<div style="left:16px;top:6px;width:998px;height:40px;background:#c9cdd3;border-radius:20px;"></div>
<svg style="left:34px;top:17px" width="18" height="18"><circle cx="7.3" cy="7.3" r="4.7" fill="none" stroke="#3f4245" stroke-width="1.7"/><path d="M10.8 10.8 L16 16" stroke="#3f4245" stroke-width="1.9"/></svg>
<svg style="left:70px;top:18px" width="15" height="16"><path d="M2.2 6 H9 Q12.6 6 12.6 9.4 Q12.6 12.8 9 12.8 H4" fill="none" stroke="#3f4245" stroke-width="1.5"/><path d="M5.6 2.4 L2 6 L5.6 9.6" fill="none" stroke="#3f4245" stroke-width="1.5"/></svg>
<svg style="left:101px;top:18px" width="15" height="16"><path d="M12.8 6 H6 Q2.4 6 2.4 9.4 Q2.4 12.8 6 12.8 H11" fill="none" stroke="#3f4245" stroke-width="1.5"/><path d="M9.4 2.4 L13 6 L9.4 9.6" fill="none" stroke="#3f4245" stroke-width="1.5"/></svg>
<svg style="left:132px;top:18px" width="18" height="17"><rect x="4.6" y="1.4" width="8.8" height="4" fill="none" stroke="#3f4245" stroke-width="1.5"/><rect x="1.6" y="5.4" width="14.8" height="7" rx="1.4" fill="none" stroke="#3f4245" stroke-width="1.5"/><rect x="4.6" y="9.6" width="8.8" height="5.2" fill="#c9cdd3" stroke="#3f4245" stroke-width="1.5"/></svg>
<svg style="left:164px;top:18px" width="16" height="19"><rect x="3.2" y="1.4" width="10.6" height="3.6" rx="0.8" fill="none" stroke="#3f4245" stroke-width="1.5"/><path d="M3.2 3.2 H1.4 V8 H8 V11.6" fill="none" stroke="#3f4245" stroke-width="1.5"/><rect x="6.6" y="11.8" width="3" height="5.2" rx="0.6" fill="none" stroke="#3f4245" stroke-width="1.4"/></svg>
<div class="t" style="left:197.5px;top:17px;font-size:14px;line-height:19px;height:19px;color:#3f4245;letter-spacing:0.176px;-webkit-text-stroke:0.25px #3f4245;">100%</div>
<svg style="left:247.5px;top:24.95px" width="8" height="4.5"><path d="M0 0 H8 L4.0 4.5 Z" fill="#3f4245"/></svg>
<div style="left:269px;top:16px;width:1px;height:20px;background:#b0b3b7;"></div>
<div class="t" style="left:282px;top:17px;font-size:13.5px;line-height:19px;height:19px;color:#3f4245;width:14px;text-align:center;-webkit-text-stroke:0.45px #3f4245;">$</div>
<div class="t" style="left:313px;top:17px;font-size:13.5px;line-height:19px;height:19px;color:#3f4245;width:16px;text-align:center;-webkit-text-stroke:0.25px #3f4245;">%</div>
<div class="t" style="left:344.5px;top:13.5px;font-size:13px;line-height:18px;height:18px;color:#3f4245;font-weight:700;letter-spacing:-0.3px;">.0</div>
<svg style="left:353px;top:29px" width="10" height="7"><path d="M9 3.5 H2 M4.4 0.8 L1.6 3.5 L4.4 6.2" fill="none" stroke="#3f4245" stroke-width="1.4"/></svg>
<div class="t" style="left:375.5px;top:13.5px;font-size:13px;line-height:18px;height:18px;color:#3f4245;font-weight:700;letter-spacing:-0.5px;">.00</div>
<svg style="left:384.5px;top:29px" width="10" height="7"><path d="M1 3.5 H8 M5.6 0.8 L8.4 3.5 L5.6 6.2" fill="none" stroke="#3f4245" stroke-width="1.4"/></svg>
<div class="t" style="left:409px;top:18px;font-size:12px;line-height:17px;height:17px;color:#3f4245;letter-spacing:-0.672px;-webkit-text-stroke:0.25px #3f4245;">123</div>
<div style="left:438px;top:16px;width:1px;height:20px;background:#b0b3b7;"></div>
<div class="t" style="left:454.5px;top:16.5px;font-size:14px;line-height:19px;height:19px;color:#3f4245;letter-spacing:0.042px;-webkit-text-stroke:0.25px #3f4245;">Defaul...</div>
<svg style="left:520.0px;top:24.35px" width="8" height="4.5"><path d="M0 0 H8 L4.0 4.5 Z" fill="#3f4245"/></svg>
<div style="left:544px;top:16px;width:1px;height:20px;background:#b0b3b7;"></div>
<div style="left:556px;top:25.6px;width:10px;height:1.8px;background:#3f4245;"></div>
<div style="left:576px;top:14px;width:34px;height:24px;border:1px solid #3f4245;border-radius:4px;"></div>
<div class="t" style="left:576px;top:17px;font-size:14px;line-height:19px;height:19px;color:#3f4245;width:34px;text-align:center;-webkit-text-stroke:0.25px #3f4245;">10</div>
<div style="left:619.8px;top:25.6px;width:10.6px;height:1.8px;background:#3f4245;"></div>
<div style="left:624.2px;top:21.2px;width:1.8px;height:10.6px;background:#3f4245;"></div>
<div style="left:641px;top:16px;width:1px;height:20px;background:#b0b3b7;"></div>
<div style="left:646px;top:11px;width:30px;height:30px;background:#b3c1dc;border-radius:4px;"></div>
<div class="t" style="left:646px;top:16px;font-size:15.5px;line-height:20px;height:20px;color:#0d2a57;font-weight:700;width:30px;text-align:center;">B</div>
<svg style="left:685px;top:19.5px" width="16" height="15"><path d="M6.2 1.2 H13.4 M2.4 13 H9.6 M9.8 1.2 L6 13" fill="none" stroke="#3f4245" stroke-width="2"/></svg>
<div class="t" style="left:715px;top:15.5px;font-size:15.5px;line-height:20px;height:20px;color:#3f4245;width:20px;text-align:center;-webkit-text-stroke:0.25px #3f4245;">S</div>
<div style="left:717px;top:25.8px;width:16.4px;height:1.7px;background:#3f4245;"></div>
<div style="left:717px;top:24.6px;width:16.4px;height:1.2px;background:#c9cdd3;"></div>
<div style="left:717px;top:27.5px;width:16.4px;height:1.0px;background:#c9cdd3;"></div>
<div class="t" style="left:748px;top:12.5px;font-size:14.5px;line-height:20px;height:20px;color:#3f4245;width:20px;text-align:center;">A</div>
<div style="left:747px;top:32px;width:23px;height:4px;background:#24302e;"></div>
<div style="left:778px;top:16px;width:1px;height:20px;background:#b0b3b7;"></div>
<svg style="left:790px;top:14px" width="20" height="18"><path d="M3 1 L11.2 9.2 L6.8 13.6 Q6 14.4 5.2 13.6 L1.6 10 Q0.8 9.2 1.6 8.4 L6.4 3.6" fill="none" stroke="#3f4245" stroke-width="1.5"/><path d="M1.6 9.2 H10.6 L6 13.8 Z" fill="#3f4245"/><path d="M14 10.4 Q16 13 16 14 Q16 15.6 14.4 15.6 Q12.8 15.6 12.8 14 Q12.8 13 14 10.4 Z" fill="#3f4245"/></svg>
<div style="left:788px;top:32px;width:23px;height:4px;background:#dcdcda;"></div>
<svg style="left:825.5px;top:19.5px" width="15" height="15"><rect x="0.9" y="0.9" width="13.2" height="13.2" fill="none" stroke="#3f4245" stroke-width="1.8"/><path d="M7.5 1 V14 M1 7.5 H14" stroke="#3f4245" stroke-width="1.6"/></svg>
<svg style="left:857.5px;top:19.5px" width="16" height="15"><path d="M4.4 1 H1 V5 M1 10 V14 H4.4 M11.6 1 H15 V5 M15 10 V14 H11.6" fill="none" stroke="#9a9da1" stroke-width="1.5"/><path d="M0.6 7.5 H6 M4 5.2 L6.4 7.5 L4 9.8 M15.4 7.5 H10 M12 5.2 L9.6 7.5 L12 9.8" fill="none" stroke="#9a9da1" stroke-width="1.4"/></svg>
<svg style="left:883.25px;top:25.2px" width="7.5" height="4"><path d="M0 0 H7.5 L3.75 4 Z" fill="#9a9da1"/></svg>
<div style="left:897px;top:16px;width:1px;height:20px;background:#b0b3b7;"></div>
<div style="left:916.5px;top:20.1px;width:3.0px;height:3.0px;background:#3f4245;border-radius:1.5px;"></div>
<div style="left:916.5px;top:25.1px;width:3.0px;height:3.0px;background:#3f4245;border-radius:1.5px;"></div>
<div style="left:916.5px;top:30.1px;width:3.0px;height:3.0px;background:#3f4245;border-radius:1.5px;"></div>
<svg style="left:979.6px;top:23px" width="12" height="8"><path d="M1.4 1.4 L6 6 L10.6 1.4" fill="none" stroke="#3f4245" stroke-width="1.6"/></svg>
<div style="left:0px;top:54px;width:1030px;height:29px;background:#d8d8d8;border-bottom:1px solid #b4b4b4;"></div>
<div class="t" style="left:14px;top:58.6px;font-size:12.6px;line-height:18px;height:18px;color:#2a2c2e;letter-spacing:-0.7px;">A1</div>
<svg style="left:85.5px;top:65.75px" width="8" height="4.5"><path d="M0 0 H8 L4.0 4.5 Z" fill="#444"/></svg>
<div style="left:106px;top:60px;width:1px;height:17px;background:#bdbdbd;"></div>
<div class="t" style="left:117.2px;top:55.3px;font-size:17.5px;line-height:22px;height:22px;color:#808080;font-style:italic;font-family:'Liberation Serif',serif;letter-spacing:-0.6px;-webkit-text-stroke:0.35px #808080;">fx</div>
<div class="t" style="left:141px;top:56.6px;font-size:14.8px;line-height:20px;height:20px;color:#2a2c2e;letter-spacing:-1.444px;">DATE</div>
<div style="left:0px;top:83px;width:1018px;height:280px;background:#d8d8d8;"></div>
<div style="left:0px;top:83px;width:1018px;height:24px;background:#d6d6d6;"></div>
<div style="left:0px;top:83px;width:46px;height:280px;background:#d6d6d6;"></div>
<div style="left:46px;top:83px;width:46px;height:23px;background:#b3c1d7;"></div>
<div style="left:0px;top:107px;width:45px;height:21px;background:#b3c1d7;"></div>
<div style="left:46px;top:279px;width:882px;height:20px;background:#fff;"></div>
<div style="left:46px;top:321px;width:882px;height:20px;background:#fff;"></div>
<div style="left:929px;top:132px;width:89px;height:231px;background:#d6caa9;"></div>
<div style="left:0px;top:106px;width:1018px;height:1px;background:#ababab;"></div>
<div style="left:41px;top:83px;width:1px;height:23px;background:#ababab;"></div>
<div style="left:91px;top:83px;width:1px;height:23px;background:#ababab;"></div>
<div style="left:242px;top:83px;width:1px;height:23px;background:#ababab;"></div>
<div style="left:443px;top:83px;width:1px;height:23px;background:#ababab;"></div>
<div style="left:644px;top:83px;width:1px;height:23px;background:#ababab;"></div>
<div style="left:715px;top:83px;width:1px;height:23px;background:#ababab;"></div>
<div style="left:786px;top:83px;width:1px;height:23px;background:#ababab;"></div>
<div style="left:857px;top:83px;width:1px;height:23px;background:#ababab;"></div>
<div style="left:928px;top:83px;width:1px;height:23px;background:#ababab;"></div>
<div style="left:0px;top:127px;width:46px;height:1px;background:#ababab;"></div>
<div style="left:0px;top:152px;width:46px;height:1px;background:#ababab;"></div>
<div style="left:46px;top:152px;width:883px;height:1px;background:#bdbdbd;"></div>
<div style="left:929px;top:152px;width:89px;height:1px;background:#c6bb9c;"></div>
<div style="left:0px;top:173px;width:46px;height:1px;background:#ababab;"></div>
<div style="left:46px;top:173px;width:883px;height:1px;background:#bdbdbd;"></div>
<div style="left:929px;top:173px;width:89px;height:1px;background:#c6bb9c;"></div>
<div style="left:0px;top:194px;width:46px;height:1px;background:#ababab;"></div>
<div style="left:46px;top:194px;width:883px;height:1px;background:#bdbdbd;"></div>
<div style="left:929px;top:194px;width:89px;height:1px;background:#c6bb9c;"></div>
<div style="left:0px;top:215px;width:46px;height:1px;background:#ababab;"></div>
<div style="left:46px;top:215px;width:883px;height:1px;background:#bdbdbd;"></div>
<div style="left:929px;top:215px;width:89px;height:1px;background:#c6bb9c;"></div>
<div style="left:0px;top:236px;width:46px;height:1px;background:#ababab;"></div>
<div style="left:46px;top:236px;width:883px;height:1px;background:#bdbdbd;"></div>
<div style="left:929px;top:236px;width:89px;height:1px;background:#c6bb9c;"></div>
<div style="left:0px;top:257px;width:46px;height:1px;background:#ababab;"></div>
<div style="left:46px;top:257px;width:883px;height:1px;background:#bdbdbd;"></div>
<div style="left:929px;top:257px;width:89px;height:1px;background:#c6bb9c;"></div>
<div style="left:0px;top:278px;width:46px;height:1px;background:#ababab;"></div>
<div style="left:46px;top:278px;width:883px;height:1px;background:#bdbdbd;"></div>
<div style="left:929px;top:278px;width:89px;height:1px;background:#c6bb9c;"></div>
<div style="left:0px;top:299px;width:46px;height:1px;background:#ababab;"></div>
<div style="left:46px;top:299px;width:883px;height:1px;background:#bdbdbd;"></div>
<div style="left:929px;top:299px;width:89px;height:1px;background:#c6bb9c;"></div>
<div style="left:0px;top:320px;width:46px;height:1px;background:#ababab;"></div>
<div style="left:46px;top:320px;width:883px;height:1px;background:#bdbdbd;"></div>
<div style="left:929px;top:320px;width:89px;height:1px;background:#c6bb9c;"></div>
<div style="left:0px;top:341px;width:46px;height:1px;background:#ababab;"></div>
<div style="left:46px;top:341px;width:883px;height:1px;background:#bdbdbd;"></div>
<div style="left:929px;top:341px;width:89px;height:1px;background:#c6bb9c;"></div>
<div style="left:0px;top:362px;width:46px;height:1px;background:#ababab;"></div>
<div style="left:46px;top:362px;width:883px;height:1px;background:#bdbdbd;"></div>
<div style="left:929px;top:362px;width:89px;height:1px;background:#c6bb9c;"></div>
<div style="left:45px;top:107px;width:1px;height:256px;background:#ababab;"></div>
<div style="left:91px;top:107px;width:1px;height:256px;background:#bdbdbd;"></div>
<div style="left:242px;top:107px;width:1px;height:256px;background:#bdbdbd;"></div>
<div style="left:443px;top:107px;width:1px;height:256px;background:#bdbdbd;"></div>
<div style="left:644px;top:107px;width:1px;height:256px;background:#bdbdbd;"></div>
<div style="left:715px;top:107px;width:1px;height:256px;background:#bdbdbd;"></div>
<div style="left:786px;top:107px;width:1px;height:256px;background:#bdbdbd;"></div>
<div style="left:857px;top:107px;width:1px;height:256px;background:#bdbdbd;"></div>
<div style="left:928px;top:107px;width:1px;height:256px;background:#bdbdbd;"></div>
<div style="left:46px;top:127px;width:972px;height:1px;background:#bdbdbd;"></div>
<div style="left:0px;top:128px;width:1018px;height:4px;background:#aaaaaa;"></div>
<div style="left:41px;top:83px;width:5px;height:23px;background:#aaaaaa;"></div>
<div class="t" style="left:48.5px;top:85.1px;font-size:10.5px;line-height:18px;height:18px;color:#0d2a57;font-weight:700;width:40px;text-align:center;">A</div>
<div class="t" style="left:147.0px;top:85.1px;font-size:10.5px;line-height:18px;height:18px;color:#4a4d50;width:40px;text-align:center;">B</div>
<div class="t" style="left:323.0px;top:85.1px;font-size:10.5px;line-height:18px;height:18px;color:#4a4d50;width:40px;text-align:center;">C</div>
<div class="t" style="left:524.0px;top:85.1px;font-size:10.5px;line-height:18px;height:18px;color:#4a4d50;width:40px;text-align:center;">D</div>
<div class="t" style="left:660.0px;top:85.1px;font-size:10.5px;line-height:18px;height:18px;color:#4a4d50;width:40px;text-align:center;">E</div>
<div class="t" style="left:731.0px;top:85.1px;font-size:10.5px;line-height:18px;height:18px;color:#4a4d50;width:40px;text-align:center;">F</div>
<div class="t" style="left:802.0px;top:85.1px;font-size:10.5px;line-height:18px;height:18px;color:#4a4d50;width:40px;text-align:center;">G</div>
<div class="t" style="left:873.0px;top:85.1px;font-size:10.5px;line-height:18px;height:18px;color:#4a4d50;width:40px;text-align:center;">H</div>
<div class="t" style="left:0px;top:107.1px;font-size:10.5px;line-height:18px;height:18px;color:#0d2a57;font-weight:700;width:45px;text-align:center;">1</div>
<div class="t" style="left:0px;top:132.1px;font-size:10.5px;line-height:18px;height:18px;color:#4a4d50;width:45px;text-align:center;">2</div>
<div class="t" style="left:0px;top:153.1px;font-size:10.5px;line-height:18px;height:18px;color:#4a4d50;width:45px;text-align:center;">3</div>
<div class="t" style="left:0px;top:174.1px;font-size:10.5px;line-height:18px;height:18px;color:#4a4d50;width:45px;text-align:center;">4</div>
<div class="t" style="left:0px;top:195.1px;font-size:10.5px;line-height:18px;height:18px;color:#4a4d50;width:45px;text-align:center;">5</div>
<div class="t" style="left:0px;top:216.1px;font-size:10.5px;line-height:18px;height:18px;color:#4a4d50;width:45px;text-align:center;">6</div>
<div class="t" style="left:0px;top:237.1px;font-size:10.5px;line-height:18px;height:18px;color:#4a4d50;width:45px;text-align:center;">7</div>
<div class="t" style="left:0px;top:258.1px;font-size:10.5px;line-height:18px;height:18px;color:#4a4d50;width:45px;text-align:center;">8</div>
<div class="t" style="left:0px;top:279.1px;font-size:10.5px;line-height:18px;height:18px;color:#4a4d50;width:45px;text-align:center;">9</div>
<div class="t" style="left:0px;top:300.1px;font-size:10.5px;line-height:18px;height:18px;color:#4a4d50;width:45px;text-align:center;">10</div>
<div class="t" style="left:0px;top:321.1px;font-size:10.5px;line-height:18px;height:18px;color:#4a4d50;width:45px;text-align:center;">11</div>
<div class="t" style="left:0px;top:342.1px;font-size:10.5px;line-height:18px;height:18px;color:#4a4d50;width:45px;text-align:center;">12</div>
<div class="t" style="left:46px;top:107px;font-size:13px;line-height:21px;height:21px;color:#2e3d3b;font-weight:700;width:45px;text-align:center;">DATE</div>
<div class="t" style="left:92px;top:107px;font-size:13px;line-height:21px;height:21px;color:#2e3d3b;font-weight:700;width:150px;text-align:center;">ITEM</div>
<div class="t" style="left:243px;top:107px;font-size:13px;line-height:21px;height:21px;color:#2e3d3b;font-weight:700;width:200px;text-align:center;">DEBIT</div>
<div class="t" style="left:444px;top:107px;font-size:13px;line-height:21px;height:21px;color:#2e3d3b;font-weight:700;width:200px;text-align:center;">CREDIT</div>
<div class="t" style="left:645px;top:107px;font-size:13px;line-height:21px;height:21px;color:#2e3d3b;font-weight:700;width:70px;text-align:center;">AMOUNT</div>
<div class="t" style="left:716px;top:107px;font-size:13px;line-height:21px;height:21px;color:#2e3d3b;font-weight:700;width:70px;text-align:center;">STAX</div>
<div class="t" style="left:787px;top:107px;font-size:13px;line-height:21px;height:21px;color:#2e3d3b;font-weight:700;width:70px;text-align:center;">STJUR</div>
<div class="t" style="left:858px;top:107px;font-size:13px;line-height:21px;height:21px;color:#2e3d3b;font-weight:700;width:70px;text-align:center;">TOTAL</div>
<div class="t" style="left:49px;top:132px;font-size:13px;line-height:21px;height:21px;color:#2e3d3b;letter-spacing:0.8px;width:39px;text-align:left;">1/5</div>
<div class="t" style="left:95px;top:132px;font-size:13px;line-height:21px;height:21px;color:#2e3d3b;letter-spacing:0.144px;width:144px;text-align:left;width:147px;">Owner's contribution</div>
<div style="left:252px;top:134.5px;width:181.5px;height:16px;background:#c5c7cb;border-radius:8px;"></div>
<div class="t" style="left:258.5px;top:132px;font-size:13px;line-height:21px;height:21px;color:#2e3d3b;letter-spacing:0.058px;width:159.5px;">1060 Chequing Bank Ac<span style="letter-spacing:-0.7px">...</span></div>
<svg style="left:419.0px;top:140.05px" width="8" height="4.5"><path d="M0 0 H8 L4.0 4.5 Z" fill="#2b302f"/></svg>
<div style="left:453px;top:134.5px;width:181.5px;height:16px;background:#c5c7cb;border-radius:8px;"></div>
<div class="t" style="left:459.5px;top:132px;font-size:13px;line-height:21px;height:21px;color:#2e3d3b;letter-spacing:0.075px;width:159.5px;">3644 Owner’s Contributi<span style="letter-spacing:-0.7px">...</span></div>
<svg style="left:620.0px;top:140.05px" width="8" height="4.5"><path d="M0 0 H8 L4.0 4.5 Z" fill="#2b302f"/></svg>
<div class="t" style="left:648.5px;top:132px;font-size:13px;line-height:21px;height:21px;color:#2e3d3b;width:63.0px;text-align:right;">2,000.00</div>
<div style="left:796px;top:134.5px;width:52px;height:16px;background:#c5c7cb;border-radius:8px;"></div>
<svg style="left:833.0px;top:140.05px" width="8" height="4.5"><path d="M0 0 H8 L4.0 4.5 Z" fill="#2b302f"/></svg>
<div class="t" style="left:861.5px;top:132px;font-size:13px;line-height:21px;height:21px;color:#2e3d3b;width:63.0px;text-align:right;">2,000.00</div>
<div class="t" style="left:49px;top:153px;font-size:13px;line-height:21px;height:21px;color:#2e3d3b;letter-spacing:0.8px;width:39px;text-align:left;">1/7</div>
<div class="t" style="left:95px;top:153px;width:147px;height:21px;line-height:21px;font-size:13px;letter-spacing:-0.082px;color:#2e3d3b;">NovaSphere <span style="color:#1253bd;text-decoration:underline;letter-spacing:0.066px;">6</span></div>
<div style="left:252px;top:155.5px;width:181.5px;height:16px;background:#c5c7cb;border-radius:8px;"></div>
<div class="t" style="left:258.5px;top:153px;font-size:13px;line-height:21px;height:21px;color:#2e3d3b;letter-spacing:0.159px;width:159.5px;">1100 Accounts Receiva<span style="letter-spacing:-0.7px">...</span></div>
<svg style="left:419.0px;top:161.05px" width="8" height="4.5"><path d="M0 0 H8 L4.0 4.5 Z" fill="#2b302f"/></svg>
<div style="left:453px;top:155.5px;width:181.5px;height:16px;background:#c5c7cb;border-radius:8px;"></div>
<div class="t" style="left:459.5px;top:153px;font-size:13px;line-height:21px;height:21px;color:#2e3d3b;letter-spacing:0.012px;width:159.5px;">4200 Sales</div>
<svg style="left:620.0px;top:161.05px" width="8" height="4.5"><path d="M0 0 H8 L4.0 4.5 Z" fill="#2b302f"/></svg>
<div class="t" style="left:648.5px;top:153px;font-size:13px;line-height:21px;height:21px;color:#2e3d3b;width:63.0px;text-align:right;">8,600.00</div>
<div class="t" style="left:719.5px;top:153px;font-size:13px;line-height:21px;height:21px;color:#2e3d3b;width:63.0px;text-align:right;">623.50</div>
<div style="left:796px;top:155px;width:61.5px;height:18.5px;background:#b3c79f;border-radius:9px 0 0 4px;"></div>
<div class="t" style="left:802.5px;top:152.8px;font-size:13px;line-height:21px;height:21px;color:#1f5a36;letter-spacing:0.2px;">CA</div>
<div class="t" style="left:861.5px;top:153px;font-size:13px;line-height:21px;height:21px;color:#2e3d3b;width:63.0px;text-align:right;">9,223.50</div>
<div class="t" style="left:49px;top:174px;font-size:13px;line-height:21px;height:21px;color:#2e3d3b;letter-spacing:0.8px;width:39px;text-align:left;">1/9</div>
<div class="t" style="left:95px;top:174px;font-size:13px;line-height:21px;height:21px;color:#2e3d3b;letter-spacing:0.083px;width:144px;text-align:left;width:147px;">Credit - LogicPoint 5897</div>
<div style="left:252px;top:176.5px;width:181.5px;height:16px;background:#c5c7cb;border-radius:8px;"></div>
<div class="t" style="left:258.5px;top:174px;font-size:13px;line-height:21px;height:21px;color:#2e3d3b;letter-spacing:0.151px;width:159.5px;">2100 Accounts Payable</div>
<svg style="left:419.0px;top:182.05px" width="8" height="4.5"><path d="M0 0 H8 L4.0 4.5 Z" fill="#2b302f"/></svg>
<div style="left:453px;top:176.5px;width:181.5px;height:16px;background:#c5c7cb;border-radius:8px;"></div>
<div class="t" style="left:459.5px;top:174px;font-size:13px;line-height:21px;height:21px;color:#2e3d3b;letter-spacing:0.058px;width:159.5px;">1060 Chequing Bank Ac<span style="letter-spacing:-0.7px">...</span></div>
<svg style="left:620.0px;top:182.05px" width="8" height="4.5"><path d="M0 0 H8 L4.0 4.5 Z" fill="#2b302f"/></svg>
<div class="t" style="left:648.5px;top:174px;font-size:13px;line-height:21px;height:21px;color:#2e3d3b;width:63.0px;text-align:right;">3,000.00</div>
<div style="left:796px;top:176.5px;width:52px;height:16px;background:#c5c7cb;border-radius:8px;"></div>
<svg style="left:833.0px;top:182.05px" width="8" height="4.5"><path d="M0 0 H8 L4.0 4.5 Z" fill="#2b302f"/></svg>
<div class="t" style="left:861.5px;top:174px;font-size:13px;line-height:21px;height:21px;color:#2e3d3b;width:63.0px;text-align:right;">3,000.00</div>
<div class="t" style="left:49px;top:195px;font-size:13px;line-height:21px;height:21px;color:#2e3d3b;letter-spacing:0.8px;width:39px;text-align:left;">1/12</div>
<div class="t" style="left:95px;top:195px;width:147px;height:21px;line-height:21px;font-size:13px;letter-spacing:0.054px;color:#2e3d3b;">GreenLeaf Mobile <span style="color:#1253bd;text-decoration:underline;letter-spacing:0.066px;">58769</span></div>
<div style="left:252px;top:197.5px;width:181.5px;height:16px;background:#c5c7cb;border-radius:8px;"></div>
<div class="t" style="left:258.5px;top:195px;font-size:13px;line-height:21px;height:21px;color:#2e3d3b;letter-spacing:0.137px;width:159.5px;">5810 Telephone and Tel<span style="letter-spacing:-0.7px">...</span></div>
<svg style="left:419.0px;top:203.05px" width="8" height="4.5"><path d="M0 0 H8 L4.0 4.5 Z" fill="#2b302f"/></svg>
<div style="left:453px;top:197.5px;width:181.5px;height:16px;background:#c5c7cb;border-radius:8px;"></div>
<div class="t" style="left:459.5px;top:195px;font-size:13px;line-height:21px;height:21px;color:#2e3d3b;letter-spacing:0.151px;width:159.5px;">2100 Accounts Payable</div>
<svg style="left:620.0px;top:203.05px" width="8" height="4.5"><path d="M0 0 H8 L4.0 4.5 Z" fill="#2b302f"/></svg>
<div class="t" style="left:648.5px;top:195px;font-size:13px;line-height:21px;height:21px;color:#2e3d3b;width:63.0px;text-align:right;">45.00</div>
<div style="left:796px;top:197.5px;width:52px;height:16px;background:#c5c7cb;border-radius:8px;"></div>
<svg style="left:833.0px;top:203.05px" width="8" height="4.5"><path d="M0 0 H8 L4.0 4.5 Z" fill="#2b302f"/></svg>
<div class="t" style="left:861.5px;top:195px;font-size:13px;line-height:21px;height:21px;color:#2e3d3b;width:63.0px;text-align:right;">45.00</div>
<div class="t" style="left:49px;top:216px;font-size:13px;line-height:21px;height:21px;color:#2e3d3b;letter-spacing:0.8px;width:39px;text-align:left;">2/1</div>
<div class="t" style="left:95px;top:216px;font-size:13px;line-height:21px;height:21px;color:#2e3d3b;letter-spacing:-0.051px;width:144px;text-align:left;width:147px;">CA Sales Tax Reset</div>
<div style="left:252px;top:218.5px;width:181.5px;height:16px;background:#c5c7cb;border-radius:8px;"></div>
<div class="t" style="left:258.5px;top:216px;font-size:13px;line-height:21px;height:21px;color:#2e3d3b;letter-spacing:0.073px;width:159.5px;">1166 Sales Tax Refund</div>
<svg style="left:419.0px;top:224.05px" width="8" height="4.5"><path d="M0 0 H8 L4.0 4.5 Z" fill="#2b302f"/></svg>
<div style="left:453px;top:218.5px;width:181.5px;height:16px;background:#c5c7cb;border-radius:8px;"></div>
<div class="t" style="left:459.5px;top:216px;font-size:13px;line-height:21px;height:21px;color:#2e3d3b;letter-spacing:0.014px;width:159.5px;">2438 Sales Tax Payable</div>
<svg style="left:620.0px;top:224.05px" width="8" height="4.5"><path d="M0 0 H8 L4.0 4.5 Z" fill="#2b302f"/></svg>
<div class="t" style="left:719.5px;top:216px;font-size:13px;line-height:21px;height:21px;color:#2e3d3b;width:63.0px;text-align:right;">623.50</div>
<div style="left:796px;top:218px;width:61.5px;height:18.5px;background:#b3c79f;border-radius:9px 0 0 4px;"></div>
<div class="t" style="left:802.5px;top:215.8px;font-size:13px;line-height:21px;height:21px;color:#1f5a36;letter-spacing:0.2px;">CA</div>
<div class="t" style="left:861.5px;top:216px;font-size:13px;line-height:21px;height:21px;color:#2e3d3b;width:63.0px;text-align:right;">623.50</div>
<div class="t" style="left:49px;top:237px;font-size:13px;line-height:21px;height:21px;color:#2e3d3b;letter-spacing:0.8px;width:39px;text-align:left;">2/3</div>
<div class="t" style="left:95px;top:237px;font-size:13px;line-height:21px;height:21px;color:#2e3d3b;letter-spacing:-0.12px;width:144px;text-align:left;width:147px;">CDTFA 20260131</div>
<div style="left:252px;top:239.5px;width:181.5px;height:16px;background:#c5c7cb;border-radius:8px;"></div>
<div class="t" style="left:258.5px;top:237px;font-size:13px;line-height:21px;height:21px;color:#2e3d3b;letter-spacing:0.014px;width:159.5px;">2438 Sales Tax Payable</div>
<svg style="left:419.0px;top:245.05px" width="8" height="4.5"><path d="M0 0 H8 L4.0 4.5 Z" fill="#2b302f"/></svg>
<div style="left:453px;top:239.5px;width:181.5px;height:16px;background:#c5c7cb;border-radius:8px;"></div>
<div class="t" style="left:459.5px;top:237px;font-size:13px;line-height:21px;height:21px;color:#2e3d3b;letter-spacing:0.151px;width:159.5px;">2100 Accounts Payable</div>
<svg style="left:620.0px;top:245.05px" width="8" height="4.5"><path d="M0 0 H8 L4.0 4.5 Z" fill="#2b302f"/></svg>
<div class="t" style="left:648.5px;top:237px;font-size:13px;line-height:21px;height:21px;color:#2e3d3b;width:63.0px;text-align:right;">623.50</div>
<div style="left:796px;top:239.5px;width:52px;height:16px;background:#c5c7cb;border-radius:8px;"></div>
<svg style="left:833.0px;top:245.05px" width="8" height="4.5"><path d="M0 0 H8 L4.0 4.5 Z" fill="#2b302f"/></svg>
<div class="t" style="left:861.5px;top:237px;font-size:13px;line-height:21px;height:21px;color:#2e3d3b;width:63.0px;text-align:right;">623.50</div>
<div class="t" style="left:49px;top:258px;font-size:13px;line-height:21px;height:21px;color:#2e3d3b;letter-spacing:0.8px;width:39px;text-align:left;">2/5</div>
<div class="t" style="left:95px;top:258px;font-size:13px;line-height:21px;height:21px;color:#2e3d3b;letter-spacing:-0.097px;width:144px;text-align:left;width:147px;">Debit - NovaSphere 6</div>
<div style="left:252px;top:260.5px;width:181.5px;height:16px;background:#c5c7cb;border-radius:8px;"></div>
<div class="t" style="left:258.5px;top:258px;font-size:13px;line-height:21px;height:21px;color:#2e3d3b;letter-spacing:0.058px;width:159.5px;">1060 Chequing Bank Ac<span style="letter-spacing:-0.7px">...</span></div>
<svg style="left:419.0px;top:266.05px" width="8" height="4.5"><path d="M0 0 H8 L4.0 4.5 Z" fill="#2b302f"/></svg>
<div style="left:453px;top:260.5px;width:181.5px;height:16px;background:#c5c7cb;border-radius:8px;"></div>
<div class="t" style="left:459.5px;top:258px;font-size:13px;line-height:21px;height:21px;color:#2e3d3b;letter-spacing:0.159px;width:159.5px;">1100 Accounts Receiva<span style="letter-spacing:-0.7px">...</span></div>
<svg style="left:620.0px;top:266.05px" width="8" height="4.5"><path d="M0 0 H8 L4.0 4.5 Z" fill="#2b302f"/></svg>
<div class="t" style="left:648.5px;top:258px;font-size:13px;line-height:21px;height:21px;color:#2e3d3b;width:63.0px;text-align:right;">9,223.50</div>
<div style="left:796px;top:260.5px;width:52px;height:16px;background:#c5c7cb;border-radius:8px;"></div>
<svg style="left:833.0px;top:266.05px" width="8" height="4.5"><path d="M0 0 H8 L4.0 4.5 Z" fill="#2b302f"/></svg>
<div class="t" style="left:861.5px;top:258px;font-size:13px;line-height:21px;height:21px;color:#2e3d3b;width:63.0px;text-align:right;">9,223.50</div>
<div class="t" style="left:49px;top:279px;font-size:13px;line-height:21px;height:21px;color:#2e3d3b;letter-spacing:0.8px;width:39px;text-align:left;">2/9</div>
<div class="t" style="left:95px;top:279px;font-size:13px;line-height:21px;height:21px;color:#2e3d3b;letter-spacing:-0.108px;width:144px;text-align:left;width:147px;">Credit - GreenLeaf Mobile 58769</div>
<div style="left:252px;top:281.5px;width:181.5px;height:16px;background:#e8eaed;border-radius:8px;"></div>
<div class="t" style="left:258.5px;top:279px;font-size:13px;line-height:21px;height:21px;color:#2e3d3b;letter-spacing:0.151px;width:159.5px;">2100 Accounts Payable</div>
<svg style="left:419.0px;top:287.05px" width="8" height="4.5"><path d="M0 0 H8 L4.0 4.5 Z" fill="#2b302f"/></svg>
<div style="left:453px;top:281.5px;width:181.5px;height:16px;background:#e8eaed;border-radius:8px;"></div>
<div class="t" style="left:459.5px;top:279px;font-size:13px;line-height:21px;height:21px;color:#2e3d3b;letter-spacing:0.132px;width:159.5px;">2111 Visa - Liberty First <span style="letter-spacing:-0.7px">...</span></div>
<svg style="left:620.0px;top:287.05px" width="8" height="4.5"><path d="M0 0 H8 L4.0 4.5 Z" fill="#2b302f"/></svg>
<div class="t" style="left:648.5px;top:279px;font-size:13px;line-height:21px;height:21px;color:#2e3d3b;width:63.0px;text-align:right;">45.00</div>
<div style="left:796px;top:281.5px;width:52px;height:16px;background:#e8eaed;border-radius:8px;"></div>
<svg style="left:833.0px;top:287.05px" width="8" height="4.5"><path d="M0 0 H8 L4.0 4.5 Z" fill="#2b302f"/></svg>
<div class="t" style="left:861.5px;top:279px;font-size:13px;line-height:21px;height:21px;color:#2e3d3b;width:63.0px;text-align:right;">45.00</div>
<div class="t" style="left:49px;top:300px;font-size:13px;line-height:21px;height:21px;color:#2e3d3b;letter-spacing:0.8px;width:39px;text-align:left;">2/15</div>
<div class="t" style="left:95px;top:300px;font-size:13px;line-height:21px;height:21px;color:#2e3d3b;letter-spacing:-0.135px;width:144px;text-align:left;width:147px;">Credit - CDTFA 20260131</div>
<div style="left:252px;top:302.5px;width:181.5px;height:16px;background:#c5c7cb;border-radius:8px;"></div>
<div class="t" style="left:258.5px;top:300px;font-size:13px;line-height:21px;height:21px;color:#2e3d3b;letter-spacing:0.151px;width:159.5px;">2100 Accounts Payable</div>
<svg style="left:419.0px;top:308.05px" width="8" height="4.5"><path d="M0 0 H8 L4.0 4.5 Z" fill="#2b302f"/></svg>
<div style="left:453px;top:302.5px;width:181.5px;height:16px;background:#c5c7cb;border-radius:8px;"></div>
<div class="t" style="left:459.5px;top:300px;font-size:13px;line-height:21px;height:21px;color:#2e3d3b;letter-spacing:0.058px;width:159.5px;">1060 Chequing Bank Ac<span style="letter-spacing:-0.7px">...</span></div>
<svg style="left:620.0px;top:308.05px" width="8" height="4.5"><path d="M0 0 H8 L4.0 4.5 Z" fill="#2b302f"/></svg>
<div class="t" style="left:648.5px;top:300px;font-size:13px;line-height:21px;height:21px;color:#2e3d3b;width:63.0px;text-align:right;">623.50</div>
<div style="left:796px;top:302.5px;width:52px;height:16px;background:#c5c7cb;border-radius:8px;"></div>
<svg style="left:833.0px;top:308.05px" width="8" height="4.5"><path d="M0 0 H8 L4.0 4.5 Z" fill="#2b302f"/></svg>
<div class="t" style="left:861.5px;top:300px;font-size:13px;line-height:21px;height:21px;color:#2e3d3b;width:63.0px;text-align:right;">623.50</div>
<div class="t" style="left:49px;top:321px;font-size:13px;line-height:21px;height:21px;color:#2e3d3b;letter-spacing:0.8px;width:39px;text-align:left;">2/23</div>
<div class="t" style="left:95px;top:321px;font-size:13px;line-height:21px;height:21px;color:#2e3d3b;letter-spacing:0.104px;width:144px;text-align:left;width:147px;">Visa payment</div>
<div style="left:252px;top:323.5px;width:181.5px;height:16px;background:#e8eaed;border-radius:8px;"></div>
<div class="t" style="left:258.5px;top:321px;font-size:13px;line-height:21px;height:21px;color:#2e3d3b;letter-spacing:0.132px;width:159.5px;">2111 Visa - Liberty First <span style="letter-spacing:-0.7px">...</span></div>
<svg style="left:419.0px;top:329.05px" width="8" height="4.5"><path d="M0 0 H8 L4.0 4.5 Z" fill="#2b302f"/></svg>
<div style="left:453px;top:323.5px;width:181.5px;height:16px;background:#e8eaed;border-radius:8px;"></div>
<div class="t" style="left:459.5px;top:321px;font-size:13px;line-height:21px;height:21px;color:#2e3d3b;letter-spacing:0.058px;width:159.5px;">1060 Chequing Bank Ac<span style="letter-spacing:-0.7px">...</span></div>
<svg style="left:620.0px;top:329.05px" width="8" height="4.5"><path d="M0 0 H8 L4.0 4.5 Z" fill="#2b302f"/></svg>
<div class="t" style="left:648.5px;top:321px;font-size:13px;line-height:21px;height:21px;color:#2e3d3b;width:63.0px;text-align:right;">45.00</div>
<div style="left:796px;top:323.5px;width:52px;height:16px;background:#e8eaed;border-radius:8px;"></div>
<svg style="left:833.0px;top:329.05px" width="8" height="4.5"><path d="M0 0 H8 L4.0 4.5 Z" fill="#2b302f"/></svg>
<div class="t" style="left:861.5px;top:321px;font-size:13px;line-height:21px;height:21px;color:#2e3d3b;width:63.0px;text-align:right;">45.00</div>
<div style="left:252px;top:344.5px;width:181.5px;height:16px;background:#c5c7cb;border-radius:8px;"></div>
<svg style="left:419.0px;top:350.05px" width="8" height="4.5"><path d="M0 0 H8 L4.0 4.5 Z" fill="#2b302f"/></svg>
<div style="left:453px;top:344.5px;width:181.5px;height:16px;background:#c5c7cb;border-radius:8px;"></div>
<svg style="left:620.0px;top:350.05px" width="8" height="4.5"><path d="M0 0 H8 L4.0 4.5 Z" fill="#2b302f"/></svg>
<div style="left:796px;top:344.5px;width:52px;height:16px;background:#c5c7cb;border-radius:8px;"></div>
<svg style="left:833.0px;top:350.05px" width="8" height="4.5"><path d="M0 0 H8 L4.0 4.5 Z" fill="#2b302f"/></svg>
<div style="left:45.6px;top:106px;width:46.4px;height:22.6px;border:1.75px solid #1253bd;"></div>
<div style="left:87.5px;top:123.5px;width:9px;height:9px;background:#1253bd;border-radius:5px;"></div>
<div class="t" style="left:72px;top:378.5px;font-size:14.5px;line-height:20px;height:20px;color:#1253bd;letter-spacing:0.068px;-webkit-text-stroke:0.3px #1253bd;">Add</div>
<div style="left:129px;top:374px;width:58px;height:31px;border:1px solid #5d5f61;border-radius:4px;"></div>
<div class="t" style="left:129px;top:378.5px;font-size:14.5px;line-height:20px;height:20px;color:#3a3d3f;letter-spacing:0.3px;width:58px;text-align:center;">1000</div>
<div class="t" style="left:195px;top:381.5px;font-size:14.5px;line-height:20px;height:20px;color:#3a3d3f;letter-spacing:-0.015px;">more rows at the bottom</div>
<div style="left:0px;top:884px;width:1030px;height:13px;background:#d8d8d8;border-top:1px solid #b9b9b9;"></div>
<div style="left:0px;top:897px;width:1030px;height:37px;background:#d3d4d6;border-top:1px solid #b9b9b9;"></div>
<div style="left:57px;top:916px;width:10px;height:2px;background:#4a4d50;"></div>
<div style="left:61px;top:912px;width:2px;height:10px;background:#4a4d50;"></div>
<div style="left:94.5px;top:911.4px;width:14px;height:2px;background:#4a4d50;"></div>
<div style="left:94.5px;top:916px;width:14px;height:2px;background:#4a4d50;"></div>
<div style="left:94.5px;top:920.6px;width:14px;height:2px;background:#4a4d50;"></div>
<div class="t" style="left:146.8px;top:907px;font-size:15px;line-height:20px;height:20px;color:#3c3f42;letter-spacing:0.428px;">Chart of Accounts</div>
<svg style="left:284.0px;top:915.15px" width="8" height="4.5"><path d="M0 0 H8 L4.0 4.5 Z" fill="#3c3f42"/></svg>
<div style="left:304px;top:898px;width:98px;height:36px;background:#bfc6d3;"></div>
<div class="t" style="left:316.5px;top:907px;font-size:15px;line-height:20px;height:20px;color:#1253bd;font-weight:700;letter-spacing:-0.096px;">Journal</div>
<svg style="left:382.0px;top:915.15px" width="8" height="4.5"><path d="M0 0 H8 L4.0 4.5 Z" fill="#1253bd"/></svg>
<div style="left:1018px;top:83px;width:12px;height:801px;background:#d8d8d8;border-left:1px solid #b9b9b9;"></div>
<div style="left:1018px;top:852px;width:12px;height:17px;background:#d4d4d4;border-left:1px solid #b9b9b9;border-top:1px solid #b9b9b9;"></div>
<div style="left:1018px;top:868px;width:12px;height:17px;background:#d4d4d4;border-left:1px solid #b9b9b9;border-top:1px solid #b9b9b9;"></div>
<svg style="left:1021.4px;top:857.5px" width="6" height="4"><path d="M0 4 L3 0.4 L6 4 Z" fill="#858585"/></svg>
<svg style="left:1021.4px;top:874.3px" width="6" height="4"><path d="M0 0 L3 3.6 L6 0 Z" fill="#858585"/></svg>
<div style="left:1018px;top:884px;width:12px;height:13px;background:#d8d8d8;border-left:1px solid #b9b9b9;border-top:1px solid #b9b9b9;"></div>
<div style="left:1019px;top:83px;width:11px;height:45px;background:#d3d3d3;"></div>
<div style="left:1019px;top:128px;width:11px;height:4px;background:#bcc3ce;"></div>
<div style="left:986px;top:885px;width:16px;height:12px;background:#d4d4d4;border-left:1px solid #b9b9b9;"></div>
<div style="left:1002px;top:885px;width:16px;height:12px;background:#d4d4d4;border-left:1px solid #b9b9b9;"></div>
<svg style="left:992px;top:887.5px" width="4" height="7"><path d="M4 0 L0.4 3.5 L4 7 Z" fill="#7d7d7d"/></svg>
<svg style="left:1008.5px;top:887.5px" width="4" height="7"><path d="M0 0 L3.6 3.5 L0 7 Z" fill="#7d7d7d"/></svg>
<div style="left:48px;top:886px;width:803px;height:9px;background:#b7b7b7;border-radius:4.5px;"></div>
<div style="left:45px;top:886px;width:1px;height:11px;background:#b5b5b5;"></div>
<div style="left:0px;top:885px;width:45px;height:12px;background:#d3d3d3;"></div>
</div>
<svg style="left:0;top:0" width="1920" height="1080"><path d="M808 1041 L808 1039 Q815 1039 815 1033 L815 1017 Q815 1010 822 1010 L838 1010 Q844 1010 844 1003 L848 1003 L848 1044 L808 1044 Z" fill="#372f1b"/><path d="M1702 1041 L1702 1039 Q1709 1039 1709 1033 L1709 1017 Q1709 1010 1716 1010 L1888 1010 Q1894 1010 1894 1003 L1898 1003 L1898 1044 L1702 1044 Z" fill="#372f1b"/><path d="M844.5 1000 L844.5 1003 Q844.5 1009.5 839 1009.6" fill="none" stroke="#7c766a" stroke-width="1"/><path d="M815.2 1034 Q815 1039.5 808 1039.5" fill="none" stroke="#7c766a" stroke-width="1"/><path d="M1894.5 1000 L1894.5 1003 Q1894.5 1009.5 1889 1009.6" fill="none" stroke="#7c766a" stroke-width="1"/><path d="M1709.2 1034 Q1709 1039.5 1702 1039.5" fill="none" stroke="#7c766a" stroke-width="1"/></svg>
<div style="left:830.9px;top:1021.3px;width:2.3px;height:2.3px;background:#cfc9b6;border-radius:1.1px;"></div>
<div style="left:1880.9px;top:1021.3px;width:2.4px;height:2.4px;background:#cfc9b6;border-radius:1.2px;"></div>
<div style="left:830.9px;top:1025.8px;width:2.3px;height:2.3px;background:#cfc9b6;border-radius:1.1px;"></div>
<div style="left:1880.9px;top:1025.8px;width:2.4px;height:2.4px;background:#cfc9b6;border-radius:1.2px;"></div>
<div style="left:830.9px;top:1030.3px;width:2.3px;height:2.3px;background:#cfc9b6;border-radius:1.1px;"></div>
<div style="left:1880.9px;top:1030.3px;width:2.4px;height:2.4px;background:#cfc9b6;border-radius:1.2px;"></div>
<div style="left:1718px;top:1019px;width:16px;height:16px;background:#2a9149;border-radius:2px;"></div>
<div style="left:1723px;top:1021px;width:2.4px;height:12px;background:#f1e6f1;"></div>
<div style="left:1720px;top:1024px;width:12px;height:2.2px;background:#f1e6f1;"></div>
<div class="t" style="left:1740px;top:1016px;font-size:15px;line-height:22px;height:22px;color:#a39d8b;letter-spacing:0.605px;">docs.google.com</div>
</div>
</body></html>
